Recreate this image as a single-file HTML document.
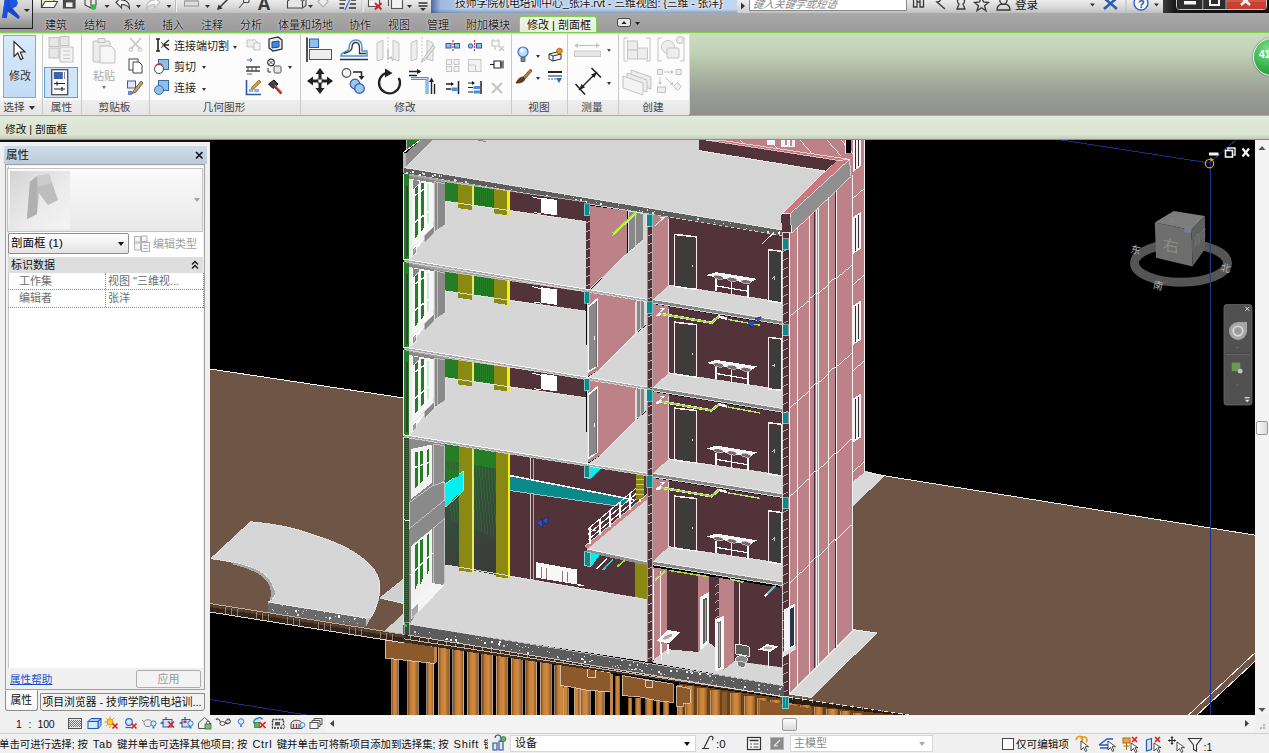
<!DOCTYPE html>
<html lang="zh-CN"><head><meta charset="utf-8"><title>Revit</title>
<style>
html,body{margin:0;padding:0;}
body{width:1269px;height:753px;overflow:hidden;position:relative;background:#f0f0f0;
 font-family:"Liberation Sans","Noto Sans CJK SC",sans-serif;font-size:11px;color:#1e1e1e;}
.abs{position:absolute;}
#view{position:absolute;left:210px;top:140px;width:1044.5px;height:575px;background:#000;overflow:hidden;}
#view svg{position:absolute;left:0;top:0;}

#qat{position:absolute;left:0;top:0;width:1269px;height:13px;background:linear-gradient(#ececec,#d6d6d6 60%,#bebebe);}
#tabs{position:absolute;left:0;top:13px;width:1269px;height:19px;background:linear-gradient(#a9a9a9,#9b9b9b);}
#tabs span{position:absolute;top:2.5px;height:18px;line-height:18px;font-size:11px;color:#222;white-space:nowrap;text-shadow:0 0 2px #e8e8e8,0 0 1px #e8e8e8;}
#acttab{position:absolute;left:518.5px;top:15.5px;width:78.5px;height:17.5px;background:linear-gradient(#f3f8ee,#e2ecd8);border:1.5px solid #7fd14b;border-bottom:none;border-radius:3px 3px 0 0;box-sizing:border-box;}
#appbtn{position:absolute;left:0;top:0;width:33px;height:29px;background:linear-gradient(#dcdcdc,#c4c4c4 45%,#8c8c8c);border-right:1.5px solid #222;border-bottom:1.5px solid #222;box-sizing:border-box;}
#title{position:absolute;left:431px;top:0;width:306px;height:13px;background:linear-gradient(rgba(0,0,0,0) 70%,rgba(40,60,90,0.35) 100%),linear-gradient(90deg,#4a6a9c 0,#9db9df 3%,#b3cbea 12%,#c3d6ef 100%);overflow:hidden;}
#title span{position:absolute;left:24px;top:-5px;font-size:10.95px;line-height:16px;color:#111;white-space:nowrap;text-shadow:0 0 3px #fff,0 0 2px #fff;letter-spacing:-0.15px;}
#search{position:absolute;left:749px;top:-3px;width:158px;height:14px;background:#fff;border:1px solid #8a8a8a;box-sizing:border-box;overflow:hidden;}
#search span{position:absolute;left:3px;top:-1px;font-size:10.5px;line-height:14px;font-style:italic;color:#8a8a8a;white-space:nowrap;transform:skewX(-12deg);}
#winbtn{position:absolute;left:1163px;top:0;width:106px;height:12.5px;background:linear-gradient(90deg,#3c3c3c,#161616 12%,#101010);}
#ribbon{position:absolute;left:0;top:32px;width:1269px;height:84px;background:linear-gradient(#cbdcc0 0%,#c1d1b6 24%,#aab5a2 50%,#999d95 75%,#8f908d 100%);border-top:1.5px solid #7fd14b;border-bottom:1.5px solid #7fd14b;box-sizing:border-box;}
#rpan{position:absolute;left:0;top:33.5px;width:689px;height:81px;background:#fcfcfc;}
#rlab{position:absolute;left:0;top:99.5px;width:689px;height:15px;background:linear-gradient(#efefef,#e4e4e4);}
.plab{position:absolute;top:100px;height:15px;line-height:15px;font-size:10.7px;color:#444;text-align:center;white-space:nowrap;}
.psep{position:absolute;top:34px;width:1px;height:80px;background:#c9c9c9;}
.rtxt{position:absolute;font-size:11px;line-height:13px;color:#1e1e1e;white-space:nowrap;}
.dd{position:absolute;width:0;height:0;border-left:2.5px solid transparent;border-right:2.5px solid transparent;border-top:3px solid #333;}
#opts{position:absolute;left:0;top:116px;width:1269px;height:23px;background:linear-gradient(#e1e9d9,#dbe4d2 80%,#c4ccbc);border-bottom:1px solid #8a8f86;box-sizing:content-box;}
#opts span{position:absolute;left:5px;top:5.5px;font-size:10.7px;line-height:14px;color:#111;}
#gap{position:absolute;left:0;top:139.5px;width:210px;height:2.2px;background:#141414;z-index:3;}
#props{position:absolute;left:0;top:140px;width:210px;height:575px;background:#f0f0f0;}
#ptitle{position:absolute;left:3.5px;top:5.5px;width:203.5px;height:18.5px;background:linear-gradient(#cfdbe8,#bccadb);}
#ptitle span{position:absolute;left:2.5px;top:2px;font-size:11.5px;line-height:15px;color:#111;}
#pbody{position:absolute;left:5px;top:24px;width:200px;height:526px;background:#f0f0f0;border:1px solid #a0a0a0;box-sizing:border-box;}
#pwhite{position:absolute;left:7.5px;top:26px;width:195.5px;height:502px;background:#fff;border-left:1px solid #c8c8c8;box-sizing:border-box;}
#ptype{position:absolute;left:7px;top:28px;width:196px;height:64px;background:linear-gradient(#fafafa,#e9e9e9);border:1px solid #c4c4c4;box-sizing:border-box;}
#pthumb{position:absolute;left:10px;top:31px;width:60px;height:58px;background:linear-gradient(135deg,#d4d4d4,#ececec 60%,#f4f4f4);}
#psel{position:absolute;left:8px;top:93px;width:121px;height:21px;background:linear-gradient(#ffffff,#e3e3e3);border:1px solid #8e8e8e;border-radius:2px;box-sizing:border-box;}
#psel span{position:absolute;left:2px;top:2px;font-size:11.5px;line-height:15px;color:#000;}
#pedit{position:absolute;left:153px;top:97px;font-size:11px;line-height:14px;color:#a0a0a0;}
#pgrp{position:absolute;left:8px;top:117px;width:195px;height:16px;background:#dedede;}
#pgrp span{position:absolute;left:3px;top:1px;font-size:11px;line-height:14px;color:#111;}
.prow{position:absolute;left:8px;width:195px;height:17px;border-bottom:1px dotted #8a8a8a;box-sizing:border-box;}
.prow b{position:absolute;left:0;top:0;width:97px;height:16px;border-right:1px dotted #8a8a8a;font-weight:normal;font-size:11px;line-height:16px;color:#6c6c6c;text-indent:11px;}
.prow i{position:absolute;left:100px;top:0;font-style:normal;font-size:11px;line-height:16px;color:#6c6c6c;white-space:nowrap;}
#phelp{position:absolute;left:10px;top:532px;font-size:10.6px;line-height:14px;color:#1a4fd0;text-decoration:underline;}
#papply{position:absolute;left:136px;top:530px;width:65px;height:18px;border:1px solid #adadad;border-radius:2px;background:#f3f3f3;box-sizing:border-box;text-align:center;font-size:11px;line-height:16px;color:#9a9a9a;}
.ptab{position:absolute;top:552.5px;height:18.5px;border-radius:0 0 3px 3px;box-sizing:border-box;border:1px solid #8c8c8c;font-size:10.8px;line-height:16.5px;color:#111;white-space:nowrap;text-align:center;background:#f2f2f2;}
#vcb{position:absolute;left:0;top:715px;width:1269px;height:18px;background:#f0f0f0;}
#vcb .sc{position:absolute;left:22px;top:2px;font-size:10.5px;line-height:14px;color:#111;letter-spacing:0.4px;white-space:pre;}
#hscroll{position:absolute;left:326px;top:715.5px;width:928.5px;height:16px;background:#f3f3f3;border-top:1px solid #fafafa;}
#vscroll{position:absolute;left:1254.5px;top:140px;width:14.5px;height:575px;background:#f3f3f3;}
.thumb{position:absolute;background:linear-gradient(90deg,#fdfdfd,#d8d8d8);border:1px solid #9a9a9a;border-radius:2px;box-sizing:border-box;}
#status{position:absolute;left:0;top:733px;width:1269px;height:20px;background:#f0f0f0;border-top:1px solid #d0d0d0;box-sizing:border-box;}
#status .msg{position:absolute;left:-1px;top:3px;width:489px;overflow:hidden;white-space:nowrap;font-size:10.4px;line-height:15px;color:#111;}
#status .msg u{text-decoration:none;letter-spacing:0.7px;margin:0 1.5px 0 2px;font-size:11px;}
.combo{position:absolute;top:735px;height:17px;background:#fff;border:1px solid #d6d6d6;box-sizing:border-box;font-size:11px;line-height:15px;white-space:nowrap;}

</style></head><body>
<div id="qat"></div>
<div id="title"><span>技师学院机电培训中心_张洋.rvt - 三维视图: {三维 - 张洋}</span></div>
<div class="abs" style="left:738px;top:0;width:11px;height:13px;background:linear-gradient(#efefef,#cfcfcf)"></div>
<svg class="abs" style="left:740px;top:2px" width="6" height="8" viewBox="0 0 6 8"><path d="M1,0.5 L5,4 L1,7.5z" fill="#333"/></svg>
<div id="search"><span>键入关键字或短语</span></div>
<svg class="abs" style="left:0px;top:0px" width="432" height="13" viewBox="0 0 432 13"><g fill="none" stroke="#444" stroke-width="1.1"><path d="M41.5,7.5 V-3 H46 L48,-1 H54 V2" fill="#f4ecd0"/><path d="M41.5,7.5 L45,1.5 H57.5 L54,7.5z" fill="#fdfdfd"/><rect x="63.5" y="-6" width="11.5" height="14" fill="#4c4c4c"/><rect x="66" y="2.500" width="6.500" height="4.500" fill="#f0f0f0" stroke="none"/><rect x="66" y="-6" width="6.500" height="5" fill="#e0e0e0" stroke="none"/><path d="M85,-3 L85,5 L91,8 L96,5 L96,-3" fill="#e8e8e8"/><path d="M91,0 V8" /><path d="M116,2.500 L121.5,-3 V0 C126.5,0 129.5,2.500 129.5,8.500 C127.5,5 125.5,4.500 121.5,4.500 V8z" fill="#f2f2f2" stroke="#3c3c3c"/><path d="M160,2.500 L154.500,-3 V0 C149.500,0 146.500,2.500 146.500,8.500 C148.500,5 150.500,4.500 154.500,4.500 V8z" fill="#f6f6f6" stroke="#bdbdbd"/><rect x="186" y="-4" width="11" height="5" stroke="#a8a8a8" fill="#eee"/><rect x="184.500" y="1" width="14" height="5" stroke="#9a9a9a" fill="#ddd"/><path d="M219.5,7.5 L230.5,-3.5" stroke="#333" stroke-width="1.400"/><path d="M217,10 l1.500,-5.500 l4,4z M233,-6 l-1.500,5.500 l-4,-4z" fill="#333" stroke="none"/><path d="M239,8 L244.500,1.500" stroke="#555"/><rect x="243.500" y="-4" width="5.500" height="6.500" rx="1" fill="#f0f0f0" stroke="#444"/><path d="M287.500,1 L295,-4 L302.500,1 V8 H287.500z" fill="#e6e6e6" stroke="#444"/><path d="M295,-4 L299,-6 L306,-1 L302.500,1 M302.500,8 L306,5.500 V-1" stroke="#555" fill="#d4d4d4"/><path d="M323,-4 L328,1.500 L323,7 L318,1.500z" stroke="#ababab" fill="#ececec"/><path d="M339.500,0 H346 M351,0 H356 M339.500,4 H345 M350,4 H356 M339.500,8 H344 M349,8 H356" stroke="#333" stroke-width="1.400"/><path d="M345,10 L351.500,-4" stroke="#3a78d8" stroke-width="1.300"/><rect x="368.500" y="-3" width="11" height="9.500" fill="#f2f2f2" stroke="#555"/><path d="M368.500,-0.500 h11" stroke="#555"/><rect x="391.500" y="-1" width="11" height="9.500" fill="#f2f2f2" stroke="#555"/><path d="M388.500,6 V-4 H399" stroke="#555"/></g><circle cx="93.500" cy="7" r="2.800" fill="#2fbf3a"/><path d="M375,3 l6.500,6.500 m0,-6.500 l-6.500,6.500" stroke="#e02020" stroke-width="2" fill="none"/><text x="257.500" y="10" font-family="Liberation Sans,sans-serif" font-weight="bold" font-size="18" fill="#3a3a3a">A</text><path d="M418.500,3 h9 M418.500,6 h9" stroke="#333" stroke-width="1.400"/><path d="M420,8 h6 l-3,3z" fill="#333"/><path d="M104.5,5 h5 l-2.500,3z" fill="#333"/><path d="M136,5 h5 l-2.500,3z" fill="#333"/><path d="M166.5,5 h5 l-2.500,3z" fill="#333"/><path d="M205,5 h5 l-2.500,3z" fill="#333"/><path d="M308,5 h5 l-2.500,3z" fill="#333"/><path d="M407,5 h5 l-2.500,3z" fill="#333"/><path d="M175.500,0 V12" stroke="#bbb"/><path d="M176.500,0 V12" stroke="#f4f4f4"/><path d="M362,0 V12" stroke="#bbb"/><path d="M363,0 V12" stroke="#f4f4f4"/></svg>
<svg class="abs" style="left:900px;top:0px" width="265" height="13" viewBox="900 0 265 13"><g fill="none" stroke="#3a3a3a" stroke-width="1.3"><path d="M913.5,-2 v9 h3.5 v-9 M920,-2 v9 h3.5 v-9 M917,2 h3" /><path d="M933,-3 a4,4 0 1 1 4,5 l8,7" /><path d="M957,9 l2,-5 a3.5,3.5 0 1 1 4,0 l2,5z" /><path d="M981.5,-3 l2,5 5,0.5 -4,3.2 1.5,5 -4.5,-3 -4.5,3 1.5,-5 -4,-3.2 5,-0.5z" /><path d="M1003.5,-4 a3.6,4.2 0 1 1 -0.1,0 M997,10 c0,-5 3,-6 6.5,-6 s6.500,1 6.500,6z" /></g><text x="1015" y="8.5" font-family="Liberation Sans,Noto Sans CJK SC,sans-serif" font-size="11.5" fill="#111">登录</text><path d="M1090,3.5 h5 l-2.500,3z M1154,3.5 h5 l-2.500,3z" fill="#333"/><path d="M1104,-2 L1117,9 M1117,-2 L1104,9" stroke="#2a5db0" stroke-width="2.6" fill="none"/><circle cx="1141" cy="3" r="7" fill="#f4f8ff" stroke="#3a62b4" stroke-width="1.4"/><text x="1138" y="7.5" font-family="Liberation Sans,sans-serif" font-weight="bold" font-size="11" fill="#2a52a4">?</text><path d="M1126,0 V12" stroke="#bbb"/></svg>
<div id="winbtn"></div>
<svg class="abs" style="left:1163px;top:0px" width="106" height="13" viewBox="1163 0 106 13"><rect x="1176.500" y="-4" width="90" height="13.500" rx="3" fill="none" stroke="#c8c8c8" stroke-width="1"/><rect x="1177.500" y="-4" width="25" height="13" fill="#2c2c2c"/><rect x="1203.500" y="-4" width="22" height="13" fill="#2c2c2c"/><rect x="1226.500" y="-4" width="39.500" height="13" rx="2" fill="#c8402e"/><rect x="1226.500" y="-4" width="39.500" height="6" fill="#d86a58" opacity="0.6"/><path d="M1202.800,-2 V9.500 M1226,-2 V9.500" stroke="#bbb" stroke-width="1"/><rect x="1184" y="1" width="12" height="3.500" fill="#f4f4f4"/><path d="M1210,-3 h9 v8 h-9z" fill="none" stroke="#f4f4f4" stroke-width="2"/><path d="M1241,-3 l9,8 M1250,-3 l-9,8" stroke="#f4f4f4" stroke-width="2.600"/></svg>
<div id="tabs">
<span style="left:45px">建筑</span>
<span style="left:84px">结构</span>
<span style="left:123px">系统</span>
<span style="left:162px">插入</span>
<span style="left:201px">注释</span>
<span style="left:240px">分析</span>
<span style="left:278px">体量和场地</span>
<span style="left:349px">协作</span>
<span style="left:388px">视图</span>
<span style="left:427px">管理</span>
<span style="left:466px">附加模块</span>
</div>
<div id="acttab"></div>
<div class="abs" style="left:527px;top:15.500px;font-size:11px;line-height:18px;color:#111;white-space:nowrap">修改 | 剖面框</div>
<svg class="abs" style="left:617px;top:17px" width="26" height="12" viewBox="0 0 26 12"><rect x="0.500" y="1.500" width="13" height="8" rx="2" fill="#e8e8e8" stroke="#444"/><path d="M4.500,7 h5 l-2.500,-3z" fill="#222"/><path d="M18,5 h5 l-2.500,3z" fill="#222"/></svg>
<div id="appbtn"></div>
<svg class="abs" style="left:0px;top:0px" width="32" height="28" viewBox="0 0 32 28"><path d="M4.800,-1 L16.300,-1 L17.700,2.900 L16.300,6.200 L12.500,8.300 L19.900,16.700 L18.400,19.100 L8.300,12 L7.700,12 L6.700,18.200 L2.200,17.700z" fill="#1747cc"/><path d="M9,-1 L16.300,-1 L17.700,2.900 L16.300,6.200 L12.500,8.300 L9.500,7z" fill="#1f56de"/><path d="M4.800,-1 L8,-1 L5.500,17.900 L2.200,17.700z" fill="#1a50e0"/><path d="M23.900,9.100 h6 l-3,2.800z" fill="#2a2a2a"/></svg>
<div id="ribbon"></div><div id="rpan"></div><div id="rlab"></div>
<div class="psep" style="left:41.5px"></div>
<div class="psep" style="left:81px"></div>
<div class="psep" style="left:148.5px"></div>
<div class="psep" style="left:299.5px"></div>
<div class="psep" style="left:510.5px"></div>
<div class="psep" style="left:567px"></div>
<div class="psep" style="left:617.5px"></div>
<div class="abs" style="left:688.500px;top:34px;width:1.500px;height:80px;background:#d8e4cf"></div>
<div class="plab" style="left:1px;width:26px">选择</div>
<div class="plab" style="left:42px;width:39px">属性</div>
<div class="plab" style="left:81px;width:67px">剪贴板</div>
<div class="plab" style="left:149px;width:150px">几何图形</div>
<div class="plab" style="left:300px;width:210px">修改</div>
<div class="plab" style="left:511px;width:56px">视图</div>
<div class="plab" style="left:567px;width:50px">测量</div>
<div class="plab" style="left:618px;width:70px">创建</div>
<div class="dd" style="left:29px;top:105.5px;border-left-width:3.5px;border-right-width:3.5px;border-top-width:4px"></div>
<div class="abs" style="left:2.500px;top:34.500px;width:33px;height:63px;background:linear-gradient(#d9eaf9,#c2dcf5);border:1px solid #74aee2;box-sizing:border-box"></div>
<svg class="abs" style="left:12px;top:40px" width="16" height="22" viewBox="0 0 16 22"><path d="M2,1.500 L2,16.500 L5.800,13 L8.600,19.500 L11,18.500 L8.200,12 L13,12z" fill="#fff" stroke="#222" stroke-width="1.100"/></svg>
<div class="rtxt" style="left:9px;top:70px;color:#333">修改</div>
<svg class="abs" style="left:47px;top:36px" width="29" height="28" viewBox="0 0 29 28"><g fill="#e6e6e6" stroke="#c2c2c2" stroke-width="1"><rect x="2" y="1.500" width="10" height="9"/><rect x="13" y="0.500" width="9" height="9"/><rect x="2" y="12" width="10" height="10"/><rect x="13" y="11" width="13" height="15" fill="#f2f2f2"/></g><path d="M16,15 h7 M16,19 h7 M16,22.500 h7" stroke="#c8c8c8"/></svg>
<div class="abs" style="left:44px;top:67px;width:34px;height:31px;background:#cfe6fa;border:1px solid #5ba0e0;box-sizing:border-box"></div>
<svg class="abs" style="left:51px;top:69px" width="18" height="27" viewBox="0 0 18 27"><rect x="0.700" y="0.700" width="16" height="25" fill="#fbfbfb" stroke="#444" stroke-width="1.200"/><rect x="2.800" y="3" width="9" height="7" fill="#3c64a8"/><path d="M13.500,3 V10" stroke="#888"/><path d="M3,14.500 h11 M3,20 h11" stroke="#222" stroke-width="1.200"/><path d="M6,12.500 v4 M11,18 v4" stroke="#222" stroke-width="1.200"/></svg>
<svg class="abs" style="left:91px;top:37px" width="27" height="28" viewBox="0 0 27 28"><g fill="#ececec" stroke="#c0c0c0"><rect x="2" y="4" width="17" height="21" rx="1"/><rect x="7" y="1.500" width="7" height="4"/><path d="M9,9 h11 l4,4 v13 h-15z" fill="#f6f6f6"/></g></svg>
<div class="rtxt" style="left:93px;top:70px;color:#ababab">粘贴</div>
<div class="dd" style="left:101.5px;top:86px;border-top-color:#777"></div>
<svg class="abs" style="left:127px;top:37px" width="18" height="15" viewBox="0 0 18 15"><path d="M3,1 L13,12 M14,1 L4,12" stroke="#c2c2c2" stroke-width="1.400"/><circle cx="4" cy="12.500" r="1.800" fill="none" stroke="#c2c2c2"/><circle cx="13" cy="12.500" r="1.800" fill="none" stroke="#c2c2c2"/></svg>
<svg class="abs" style="left:127px;top:58px" width="18" height="16" viewBox="0 0 18 16"><rect x="2" y="1" width="9" height="11" fill="#fff" stroke="#444"/><path d="M6,4 h6 l3,3 v8 h-9z" fill="#fff" stroke="#444"/></svg>
<svg class="abs" style="left:126px;top:80px" width="19" height="16" viewBox="0 0 19 16"><rect x="1.500" y="1" width="8" height="7" fill="#dfe8f4" stroke="#3a5a98"/><path d="M15,1 L8,10 L5,14 L10,12 L17,3z" fill="#caa56a" stroke="#444" stroke-width="0.800"/><path d="M2,11 h4 v4 h-4z" fill="#6a8ad0"/></svg>
<svg class="abs" style="left:154px;top:37px" width="17" height="16" viewBox="0 0 17 16"><path d="M2,2 h4 M2,14 h4 M4,2 V14" stroke="#222" stroke-width="1.600"/><path d="M15,3 L9,8 L15,13 M9,8 h6" stroke="#222" stroke-width="1.300" fill="none"/><path d="M7,5 l3,3 l-3,3" fill="none" stroke="#555"/></svg>
<div class="rtxt" style="left:174px;top:40px">连接端切割</div>
<div class="dd" style="left:233px;top:45.5px;border-top-color:#333"></div>
<svg class="abs" style="left:153px;top:58px" width="17" height="17" viewBox="0 0 17 17"><rect x="5.500" y="1.500" width="10" height="10" fill="#8fc0ea" stroke="#3a6aa8"/><circle cx="6" cy="11" r="4.500" fill="#fff" stroke="#444"/><path d="M2.500,8 a4.500,4.500 0 0 1 7,-1" fill="none" stroke="#d03030" stroke-width="1.200"/></svg>
<div class="rtxt" style="left:174px;top:60.500px">剪切</div>
<div class="dd" style="left:201.5px;top:66px;border-top-color:#333"></div>
<svg class="abs" style="left:153px;top:79px" width="17" height="17" viewBox="0 0 17 17"><rect x="5.500" y="1.500" width="10" height="10" fill="#8fc0ea" stroke="#3a6aa8"/><circle cx="6" cy="11" r="4.500" fill="#8fc0ea" stroke="#3a6aa8"/></svg>
<div class="rtxt" style="left:174px;top:81.500px">连接</div>
<div class="dd" style="left:201.5px;top:87.5px;border-top-color:#333"></div>
<svg class="abs" style="left:245px;top:37px" width="17" height="16" viewBox="0 0 17 16"><path d="M2,3 h7 l0,-1 l5,5 l-5,5 v-2 h-7z" fill="#eee" stroke="#c4c4c4"/><rect x="9" y="6" width="6" height="7" fill="#f4f4f4" stroke="#c4c4c4"/></svg>
<svg class="abs" style="left:267px;top:36px" width="17" height="17" viewBox="0 0 17 17"><path d="M2,3 L11,1 L15,4 L15,13 L6,15 L2,12z" fill="#e8eef8" stroke="#222" stroke-width="1.200"/><path d="M5,6 L12,5 V11 L5,12z" fill="#4a86d8" stroke="#1c4a98"/></svg>
<svg class="abs" style="left:245px;top:58px" width="17" height="17" viewBox="0 0 17 17"><path d="M1,9 h14 M1,13 h14" stroke="#444" stroke-width="1.300"/><path d="M3,9 v4 M7,9 v4 M11,9 v4" stroke="#444"/><path d="M2,2 h5 m-2,-2 l2,2 l-2,2 M2,16 h5" stroke="#2a6ad0" fill="none"/></svg>
<svg class="abs" style="left:266px;top:58px" width="20" height="17" viewBox="0 0 20 17"><circle cx="5" cy="4.500" r="3.300" fill="none" stroke="#333" stroke-width="1.200"/><path d="M3,2.500 l4,4 m0,-4 l-4,4" stroke="#333" stroke-width="0.800"/><rect x="8" y="8" width="7" height="7" rx="1.500" fill="#e4e4e4" stroke="#555"/><path d="M2,10 v4 h3" fill="none" stroke="#333"/></svg>
<div class="dd" style="left:288px;top:65.5px;border-top-color:#333"></div>
<svg class="abs" style="left:245px;top:79px" width="18" height="17" viewBox="0 0 18 17"><path d="M1.500,1 V15.500 H16" stroke="#2a5aa8" stroke-width="1.600" fill="none"/><path d="M4,13 h4 v-3 h-4z M9,13 h5 v-3 h-5z" fill="#8ab0e0"/><path d="M6,9 L14,1 L16,3 L8,10.500z" fill="#e0a030" stroke="#7a4a10" stroke-width="0.700"/></svg>
<svg class="abs" style="left:267px;top:79px" width="17" height="17" viewBox="0 0 17 17"><path d="M1.500,5 L7,1 L11,5 L6,9.500z" fill="#444" stroke="#111"/><path d="M7.500,7 L14.500,14.500" stroke="#b0302a" stroke-width="2.600"/><path d="M8,6 L15,13.500" stroke="#e88a70" stroke-width="0.800"/></svg>
<svg class="abs" style="left:305px;top:37px" width="29" height="27" viewBox="0 0 29 27"><path d="M2,0.500 V25" stroke="#222" stroke-width="1.600"/><rect x="4.500" y="2" width="9" height="8.500" fill="#8ec0ee" stroke="#2a5aa0"/><rect x="4.500" y="12.500" width="22" height="10" fill="#eeeeee" stroke="#555"/></svg>
<svg class="abs" style="left:339px;top:38px" width="30" height="24" viewBox="0 0 30 24"><path d="M2,18 C2,13 10,15 10,10 C10,4 14,2 17,2 C21,2 23,5 23,10 L23,13 H28 V18z" fill="none" stroke="#4a90d8" stroke-width="1.500"/><path d="M1,21.500 H29" stroke="#333" stroke-width="1.500"/><path d="M5,15.500 C8,14 13,14 13,9.500 C13,6 15,4.500 17,4.500 C19.500,4.500 20.500,6.500 20.500,10 V15.500 H27" fill="none" stroke="#333" stroke-width="1.300"/></svg>
<svg class="abs" style="left:375px;top:37px" width="27" height="27" viewBox="0 0 27 27"><path d="M2,6 L8,3 V22 L2,24z M24,6 L18,3 V22 L24,24z" fill="#ededed" stroke="#c4c4c4"/><path d="M13,0 V26" stroke="#c4c4c4" stroke-dasharray="2 1.500"/><path d="M13,12 v10 l3,-2 l2,4" fill="none" stroke="#bcbcbc" stroke-width="1.200"/></svg>
<svg class="abs" style="left:409px;top:37px" width="27" height="27" viewBox="0 0 27 27"><path d="M2,6 L8,3 V22 L2,24z M24,6 L18,3 V22 L24,24z" fill="#ededed" stroke="#c4c4c4"/><path d="M13,0 V26" stroke="#c4c4c4" stroke-dasharray="2 1.500"/><path d="M24,8 L14,22 L12,25 L16,23 L26,10z" fill="#e4e4e4" stroke="#bcbcbc"/></svg>
<svg class="abs" style="left:306px;top:67px" width="28" height="28" viewBox="0 0 28 28"><path d="M14,1 L9.500,7 H12.500 V12.500 H7 V9.500 L1,14 L7,18.500 V15.500 H12.500 V21 H9.500 L14,27 L18.500,21 H15.500 V15.500 H21 V18.500 L27,14 L21,9.500 V12.500 H15.500 V7 H18.500z" fill="#222"/><rect x="12" y="12" width="4" height="4" fill="#fff" stroke="#222" stroke-width="0.800"/></svg>
<svg class="abs" style="left:340px;top:67px" width="29" height="28" viewBox="0 0 29 28"><circle cx="6.500" cy="6" r="4.300" fill="#f4f4f4" stroke="#555" stroke-width="1.200"/><path d="M13,5 H21.500 V10" fill="none" stroke="#222" stroke-width="1.500"/><path d="M18.500,9 h6 l-3,4z" fill="#222"/><circle cx="15" cy="17" r="4.800" fill="#9cc8f0" stroke="#2a5aa0" stroke-width="1.200"/><circle cx="19.500" cy="21.500" r="4.800" fill="#9cc8f0" stroke="#2a5aa0" stroke-width="1.200"/></svg>
<svg class="abs" style="left:375px;top:67px" width="28" height="29" viewBox="0 0 28 29"><path d="M11.500,5.800 A10.500,10.500 0 1 0 23.800,11" fill="none" stroke="#222" stroke-width="2.300"/><path d="M10,1.500 L17.500,6 L10,10.500z" fill="#222"/></svg>
<svg class="abs" style="left:408px;top:67px" width="30" height="28" viewBox="0 0 30 28"><path d="M1,4.500 H12 M1,8.500 H9" stroke="#222" stroke-width="1.400"/><path d="M9,2 l4.500,2.500 l-4.500,2.500z" fill="#222"/><path d="M3,11.500 H19 V27" fill="none" stroke="#4a90d8" stroke-width="3"/><path d="M3,11.500 H19 V27" fill="none" stroke="#cfe4f8" stroke-width="1"/><path d="M23.500,27 V14 M26.500,27 V17" stroke="#222" stroke-width="1.400"/><path d="M21,15 l2.500,-4.500 l2.500,4.500z" fill="#222"/></svg>
<svg class="abs" style="left:445px;top:40px" width="16" height="12" viewBox="0 0 16 12"><rect x="1" y="3.500" width="5" height="4.500" fill="#8ec0ee" stroke="#2a5aa0"/><rect x="9.500" y="3.500" width="5" height="4.500" fill="#8ec0ee" stroke="#2a5aa0"/><path d="M8,0 V11.500" stroke="#d03030" stroke-width="1.200" stroke-dasharray="2 1"/></svg>
<svg class="abs" style="left:467px;top:40px" width="16" height="12" viewBox="0 0 16 12"><circle cx="3.500" cy="6" r="2.200" fill="#8ec0ee" stroke="#2a5aa0"/><rect x="9.500" y="3.500" width="5" height="4.500" fill="#8ec0ee" stroke="#2a5aa0"/><path d="M7.500,0 V11.500" stroke="#d03030" stroke-width="1.200" stroke-dasharray="2 1"/></svg>
<svg class="abs" style="left:490px;top:38px" width="15" height="14" viewBox="0 0 15 14"><path d="M2,3 h7 v5 h-7z M5,8 v4 M3,1 v2 M8,1 v2" fill="none" stroke="#c4c4c4" stroke-width="1.200"/><path d="M9,8 l5,5 m0,-5 l-5,5" stroke="#c8c8c8" stroke-width="1.200"/></svg>
<svg class="abs" style="left:445px;top:58px" width="16" height="15" viewBox="0 0 16 15"><g fill="#f2f2f2" stroke="#c6c6c6"><rect x="1.500" y="1.500" width="5" height="5"/><rect x="9" y="1.500" width="5" height="5"/><rect x="1.500" y="8.500" width="5" height="5"/><rect x="9" y="8.500" width="5" height="5"/></g></svg>
<svg class="abs" style="left:467px;top:58px" width="16" height="15" viewBox="0 0 16 15"><g fill="#f2f2f2" stroke="#c6c6c6"><rect x="1.500" y="1.500" width="12.500" height="12"/><rect x="1.500" y="7" width="7" height="6.500"/></g></svg>
<svg class="abs" style="left:489px;top:59px" width="16" height="13" viewBox="0 0 16 13"><path d="M5,2 h7 v7 h-7z" fill="#fff" stroke="#222" stroke-width="1.100"/><path d="M1,5.500 h4 M12,3 v5 M14,1.500 v8" stroke="#222" stroke-width="1.100"/></svg>
<svg class="abs" style="left:445px;top:80px" width="16" height="15" viewBox="0 0 16 15"><path d="M1,4 h7 M1,9 h5" stroke="#222" stroke-width="1.300"/><path d="M6,2 l3,2 l-3,2z" fill="#222"/><path d="M13.500,1 V14" stroke="#222" stroke-width="1.500"/><rect x="6.500" y="7.500" width="6" height="3.500" fill="#4a90d8"/></svg>
<svg class="abs" style="left:467px;top:80px" width="16" height="15" viewBox="0 0 16 15"><path d="M1,3 h6 M1,7.500 h5 M1,12 h5" stroke="#222" stroke-width="1.200"/><path d="M5,1 l3,2 l-3,2z" fill="#222"/><path d="M14,1 V14" stroke="#222" stroke-width="1.500"/><rect x="6.500" y="6" width="6.500" height="3" fill="#4a90d8"/><rect x="6.500" y="10.500" width="6.500" height="3" fill="#4a90d8"/></svg>
<svg class="abs" style="left:490px;top:81px" width="15" height="14" viewBox="0 0 15 14"><path d="M2,2 L12,12 M12,2 L2,12" stroke="#c8c8c8" stroke-width="2.400"/></svg>
<svg class="abs" style="left:516px;top:45px" width="15" height="20" viewBox="0 0 15 20"><circle cx="7" cy="7" r="5" fill="#bcdcf8" stroke="#3a72c0" stroke-width="1.200"/><circle cx="6" cy="5.500" r="2" fill="#f4faff"/><path d="M5,12.500 h4 v4 h-4z" fill="#888" stroke="#444" stroke-width="0.700"/></svg>
<div class="dd" style="left:535.5px;top:54.5px;border-top-color:#333"></div>
<svg class="abs" style="left:547px;top:47px" width="17" height="16" viewBox="0 0 17 16"><path d="M2,7 L10,5 L14,7 V12 L6,14 L2,12z" fill="#f4f4f4" stroke="#333"/><path d="M2,7 L6,9 L14,7 M6,9 V14" fill="none" stroke="#333"/><circle cx="12.500" cy="4" r="2.800" fill="#f0901c" stroke="#a85a08" stroke-width="0.800"/></svg>
<svg class="abs" style="left:515px;top:68px" width="18" height="17" viewBox="0 0 18 17"><path d="M15.500,1 L8,9 L10,11 L17,3z" fill="#b87838" stroke="#5a3a10" stroke-width="0.700"/><path d="M8,9 C5,9 3,11 1,15 C5,15.500 9,14 10,11z" fill="#6a3a14" stroke="#3a1a08" stroke-width="0.700"/></svg>
<div class="dd" style="left:535.5px;top:76.5px;border-top-color:#333"></div>
<svg class="abs" style="left:547px;top:69px" width="17" height="16" viewBox="0 0 17 16"><path d="M1,3 H15" stroke="#222" stroke-width="2"/><path d="M1,7 H15" stroke="#222" stroke-width="1"/><path d="M1,10 H9" stroke="#2a6ad0" stroke-width="1" stroke-dasharray="2 1"/><path d="M9,9 h6 l-3,5z" fill="#2a6ad0"/></svg>
<svg class="abs" style="left:573px;top:41px" width="29" height="18" viewBox="0 0 29 18"><path d="M3,4.500 H25" stroke="#c4c4c4" stroke-width="1.200"/><path d="M1,4.500 l4,-2.500 v5z M27,4.500 l-4,-2.500 v5z" fill="#c4c4c4"/><rect x="1.500" y="10" width="26" height="5.500" fill="#e6e6e6" stroke="#cacaca"/></svg>
<div class="dd" style="left:606.5px;top:48.5px;border-top-color:#555"></div>
<svg class="abs" style="left:574px;top:67px" width="29" height="29" viewBox="0 0 29 29"><path d="M5,23 L23,5" stroke="#222" stroke-width="1.400"/><path d="M1.500,17 L11,27.500 M17.500,1 L27,10.500" stroke="#222" stroke-width="1.600"/><path d="M5,23 l2.500,-6 l3.500,3.500z M23,5 l-2.500,6 l-3.500,-3.500z" fill="#222"/></svg>
<div class="dd" style="left:606.5px;top:81.5px;border-top-color:#333"></div>
<svg class="abs" style="left:622px;top:36px" width="30" height="28" viewBox="0 0 30 28"><g fill="#ededed" stroke="#c4c4c4"><path d="M6,2 h-4 v23 h4 M24,2 h4 v23 h-4" fill="none"/><rect x="5.500" y="5" width="10" height="9"/><rect x="5.500" y="14" width="10" height="9"/><rect x="15.500" y="12" width="10" height="11"/></g></svg>
<svg class="abs" style="left:656px;top:35px" width="30" height="29" viewBox="0 0 30 29"><g fill="#ededed" stroke="#c4c4c4"><path d="M6,3 h-4 v23 h4 M24,3 h4 v23 h-4" fill="none"/><circle cx="12" cy="12" r="6.500"/><rect x="11" y="13" width="12" height="10" rx="1"/><circle cx="24" cy="5" r="3.500"/></g></svg>
<svg class="abs" style="left:622px;top:68px" width="31" height="28" viewBox="0 0 31 28"><g fill="#ececec" stroke="#c2c2c2"><path d="M9,2 L29,9 V21 L9,14z"/><path d="M5,5 L25,12 V24 L5,17z"/><path d="M1,8 L21,15 V27 L1,20z" fill="#f4f4f4"/></g></svg>
<svg class="abs" style="left:656px;top:68px" width="28" height="27" viewBox="0 0 28 27"><g fill="#efefef" stroke="#c2c2c2"><rect x="1.500" y="1.500" width="5" height="5"/><rect x="20" y="1.500" width="5" height="5"/><rect x="1.500" y="19" width="8" height="5.500"/><path d="M21.500,14.500 l4,4 l-4,4 l-4,-4z"/></g><path d="M8,4 h9 M4,9 v7 M9,9 l8,8" stroke="#c2c2c2" fill="none"/><path d="M15,2 l3,2 l-3,2z M2,14 l2,3 l2,-3z M14,16.500 l3.500,1 l-1,-3.500z" fill="#c2c2c2"/></svg>
<div class="abs" style="left:1253px;top:37.500px;width:38px;height:38px;border-radius:19px;background:radial-gradient(circle at 40% 30%,#7be08a,#35b04a 55%,#1f8a34);border:1.500px solid #e8f4e4;box-sizing:border-box;box-shadow:0 0 2px #555"></div>
<div class="abs" style="left:1259px;top:49px;font-size:10px;font-weight:bold;color:#fff;line-height:12px">41</div>
<div id="opts"><span>修改 | 剖面框</span></div>
<div id="gap"></div><div id="props"><div id="ptitle"><span>属性</span></div>
<svg class="abs" style="left:195px;top:11px" width="9" height="9" viewBox="0 0 9 9"><path d="M1,1 L7.500,7.500 M7.500,1 L1,7.500" stroke="#111" stroke-width="1.600"/></svg>
<div id="pbody"></div><div id="pwhite"></div><div id="ptype"></div><div id="pthumb"></div>
<svg class="abs" style="left:16px;top:34px" width="48" height="52" viewBox="0 0 48 52"><path d="M21,2 L33,0 L42,26 L32,31 L23,19 L21,40 L11,45 L14,8z" fill="#bdbdbd"/><path d="M21,2 L33,0 L36,9 L22,13z" fill="#cccccc"/><path d="M14,8 L21,2 L21,40 L11,45z" fill="#b0b0b0"/></svg>
<div class="dd" style="left:194px;top:58px;border-left-width:3.5px;border-right-width:3.5px;border-top-width:4px;border-top-color:#a0a0a0"></div>
<div id="psel"><span>剖面框 (1)</span></div>
<div class="dd" style="left:118px;top:102px;border-left-width:3.5px;border-right-width:3.5px;border-top-width:4px;border-top-color:#111"></div>
<svg class="abs" style="left:133px;top:95px" width="18" height="18" viewBox="0 0 18 18"><g fill="#f4f4f4" stroke="#b4b4b4"><rect x="1.500" y="1.500" width="6" height="5.500"/><rect x="8.500" y="1" width="5.500" height="5.500"/><rect x="1.500" y="8" width="6" height="7"/><rect x="8.500" y="7.500" width="8" height="9"/></g><path d="M10.500,10.500 h4 M10.500,13.500 h4" stroke="#b4b4b4"/></svg>
<div id="pedit">编辑类型</div>
<div id="pgrp"><span>标识数据</span></div>
<svg class="abs" style="left:190px;top:120px" width="10" height="10" viewBox="0 0 10 10"><path d="M2,4.500 L5,1.500 L8,4.500 M2,8.500 L5,5.500 L8,8.500" fill="none" stroke="#111" stroke-width="1.300"/></svg>
<div class="prow" style="top:133px"><b>工作集</b><i>视图 "三维视...</i></div>
<div class="prow" style="top:150px;height:18px"><b style="height:17px;line-height:17px">编辑者</b><i>张洋</i></div>
<div class="abs" style="left:202.500px;top:133px;width:0;height:35px;border-left:1px dotted #8a8a8a"></div>
<div id="phelp">属性帮助</div><div id="papply">应用</div>
<div class="ptab" style="left:4.5px;width:33.5px;background:#fafafa;border-top-color:#fafafa;height:20.5px;top:550px;line-height:19px">属性</div>
<div class="ptab" style="left:39.5px;width:165px">项目浏览器 - 技师学院机电培训...</div>
</div>
<div id="vscroll"></div>
<div class="thumb" style="left:1255.5px;top:421px;width:12.500px;height:13.5px"></div>
<svg class="abs" style="left:1257px;top:144px" width="10" height="8" viewBox="0 0 10 8"><path d="M1.500,6 L5,2 L8.500,6z" fill="#555"/></svg>
<svg class="abs" style="left:1257px;top:706px" width="10" height="8" viewBox="0 0 10 8"><path d="M1.500,2 L5,6 L8.500,2z" fill="#555"/></svg>
<div id="vcb"><span class="sc" style="left:16px">1</span><span class="sc" style="left:28.5px">:</span><span class="sc" style="left:37.5px;letter-spacing:-0.2px">100</span></div>
<div id="hscroll"></div>
<div class="thumb" style="left:782px;top:717.500px;width:15px;height:13px;background:linear-gradient(#fdfdfd,#d8d8d8)"></div>
<svg class="abs" style="left:328px;top:719px" width="8" height="9" viewBox="0 0 8 9"><path d="M6,1 L2,4.500 L6,8z" fill="#444"/></svg>
<svg class="abs" style="left:1243px;top:719px" width="8" height="9" viewBox="0 0 8 9"><path d="M2,1 L6,4.500 L2,8z" fill="#444"/></svg>
<svg class="abs" style="left:1254.5px;top:716px" width="14.5" height="16" viewBox="0 0 14.5 16"><rect width="14.5" height="16" fill="#f0f0f0"/><g fill="#b8b8b8"><rect x="8" y="11" width="2" height="2"/><rect x="5" y="11" width="2" height="2"/><rect x="8" y="8" width="2" height="2"/></g></svg>
<svg class="abs" style="left:68px;top:716px" width="260" height="16" viewBox="68 0 260 16"><rect x="68.500" y="2.500" width="13" height="10" fill="#e8e8e8" stroke="#555"/><path d="M69,4.500 h12 M69,6.500 h12 M69,8.500 h12 M69,10.500 h12" stroke="#666" stroke-width="0.900" stroke-dasharray="1 1"/><path d="M69,5.500 h12 M69,7.500 h12 M69,9.500 h12" stroke="#666" stroke-width="0.900" stroke-dasharray="1 1" stroke-dashoffset="1"/><path d="M88,5.500 L91,2.500 H101 L98,5.500z M98,5.500 L101,2.500 V9.500 L98,12.500z" fill="#a8ccf4" stroke="#1c5ab8" stroke-width="1"/><rect x="88" y="5.500" width="10" height="7" fill="#d4e8fc" stroke="#1c5ab8" stroke-width="1"/><circle cx="110" cy="6" r="3.200" fill="#f8c830" stroke="#d08a10" stroke-width="0.800"/><path d="M110,0.500 v2 M110,10 v2 M104.500,6 h2 M106,2 l1.500,1.500 M114,2 l-1.500,1.500 M106,10 l1.500,-1.500" stroke="#e09a10"/><path d="M112.500,7.500 l5,5 m0,-5 l-5,5" stroke="#e02020" stroke-width="1.700"/><circle cx="129" cy="6" r="3.300" fill="#d8e8fc" stroke="#2a6ad0" stroke-width="1.200"/><path d="M125.500,11.500 h6" stroke="#2a6ad0" stroke-width="1.300"/><path d="M131.500,7.500 l5,5 m0,-5 l-5,5" stroke="#e02020" stroke-width="1.700"/><path d="M142,4 l2,2 c1,-3 7,-3 8,0 c0.500,3 -2,5 -5,4.500 c-2,0 -3,-2 -3,-4" fill="#ececec" stroke="#777" stroke-width="0.900"/><circle cx="153.500" cy="7.500" r="2.600" fill="#d8ecff" stroke="#2a7ad8" stroke-width="1"/><path d="M152.500,10.500 h2 v2 h-2z" fill="#2a7ad8"/><rect x="163" y="3.500" width="9" height="7.500" fill="#cfe0f8" stroke="#2a5ab0"/><path d="M160.500,7 h3 M166,1 v3" stroke="#2a5ab0" stroke-width="1.300"/><path d="M168,5.500 l6,6 m0,-6 l-6,6" stroke="#e02020" stroke-width="1.700"/><rect x="182" y="3.500" width="8" height="7.500" fill="#cfe0f8" stroke="#2a5ab0"/><path d="M179.500,7 h3 M185,1 v3" stroke="#2a5ab0" stroke-width="1.300"/><rect x="183.500" y="4.500" width="3" height="2.500" fill="#d03030"/><circle cx="190.500" cy="7.500" r="2.600" fill="#d8ecff" stroke="#2a7ad8" stroke-width="1"/><path d="M189.500,10.500 h2 v2 h-2z" fill="#2a7ad8"/><path d="M198.500,7 L204.500,1.500 L210.500,7 V12.500 H198.500z" fill="#f0f0f0" stroke="#555" stroke-width="1"/><rect x="205" y="8" width="6" height="5" fill="#7ab87a" stroke="#3a6a3a" stroke-width="0.800"/><path d="M206.500,8 v-1.500 a1.500,1.500 0 0 1 3,0 v1.500" fill="none" stroke="#555" stroke-width="0.900"/><path d="M216,4 c1,-2 3,-1 4,1 c0,3 4,4 5,1.500 c2,2 5,1 5,-1.500 c0,-2 -2,-2.500 -3,-1.500" fill="none" stroke="#444" stroke-width="1.100"/><ellipse cx="222.500" cy="7.500" rx="2.600" ry="2" fill="#f4f4f4" stroke="#444" stroke-width="0.900"/><ellipse cx="228" cy="5.500" rx="2.400" ry="1.800" fill="#f4f4f4" stroke="#444" stroke-width="0.900"/><circle cx="241" cy="5.500" r="2.800" fill="#d8e8fc" stroke="#3a7ad0" stroke-width="1"/><path d="M240,8.500 h2 v2.500 h-2z" fill="#5a8ad0"/><path d="M254.500,8 a3.500,3.500 0 0 1 3,-5.500 a3,3 0 0 1 5,1" fill="#cfe8d0" stroke="#2a7ad0" stroke-width="1.300"/><rect x="254.500" y="6.500" width="5" height="5" fill="#58b068" stroke="#2a7a3a" stroke-width="0.700"/><path d="M259.500,6 l6,6 m0,-6 l-6,6" stroke="#e02020" stroke-width="1.700"/><rect x="272.500" y="3.500" width="11" height="8.500" fill="#ececec" stroke="#333" stroke-dasharray="2 1" stroke-width="1.300"/><path d="M275,6 h5 v3.500 h-5z" fill="#555"/><circle cx="283" cy="10.500" r="1.800" fill="#e8e8e8" stroke="#555" stroke-width="0.600"/><path d="M291,8 c0,-5 11,-5 11,0 v4.500 h-11z" fill="#e0e0e0" stroke="#444" stroke-width="1"/><path d="M293.500,8 v4.500 M296.500,8 v4.500" stroke="#a03030" stroke-width="1.200"/><path d="M299,8 v4.500" stroke="#444"/><circle cx="302.500" cy="9" r="2.400" fill="#d8ecff" stroke="#2a7ad8" stroke-width="0.900"/><rect x="310" y="6.500" width="8" height="6" fill="#f4f4f4" stroke="#555"/><path d="M312,6.500 v-2 h8 v6 h-2 M314,4.500 v-2 h8 v6 h-2" fill="none" stroke="#555"/></svg>
<div id="status"><div class="msg">单击可进行选择; 按 <u>Tab</u> 键并单击可选择其他项目; 按 <u>Ctrl</u> 键并单击可将新项目添加到选择集; 按 <u>Shift</u> 键</div></div>
<svg class="abs" style="left:490px;top:734px" width="19" height="18" viewBox="0 0 19 18"><path d="M5,4 a3,3 0 0 1 6,0 v4 M3,9 h4 v7 h-4z M9,7 h4 v9 h-4z" fill="#dbe8f8" stroke="#2a4a88" stroke-width="1.100"/><circle cx="13.500" cy="5" r="2.500" fill="#58c048" stroke="#2a7a20" stroke-width="0.700"/></svg>
<div class="combo" style="left:510px;width:186px;color:#111"><span style="position:absolute;left:4px;top:0">设备</span></div>
<div class="dd" style="left:683.5px;top:741.5px;border-left-width:3.5px;border-right-width:3.5px;border-top-width:4px;border-top-color:#111"></div>
<svg class="abs" style="left:700px;top:735px" width="34" height="17" viewBox="0 0 34 17"><path d="M4,13 L9,3 M9,3 a2,2 0 1 1 3,2 M2,13.500 h7" fill="none" stroke="#333" stroke-width="1.200"/><text x="16" y="13" font-family="Liberation Sans,sans-serif" font-size="11.500" fill="#111">:0</text></svg>
<svg class="abs" style="left:746px;top:735px" width="42" height="17" viewBox="0 0 42 17"><rect x="1.500" y="2.500" width="13" height="12" fill="#f8f8f8" stroke="#333" stroke-width="1.200"/><path d="M3.500,5.500 h9" stroke="#333" stroke-width="1.500"/><path d="M4,9 h2 M4,12 h2 M7.500,9 h5 M7.500,12 h5" stroke="#555"/><rect x="24.500" y="2.500" width="13" height="12" fill="#8a8a8a" stroke="#b4b4b4"/><path d="M28,11 L34,5 M28,11 h4" stroke="#e8e8e8" stroke-width="1.200" fill="none"/></svg>
<div class="combo" style="left:790px;width:143px;color:#8a8a8a"><span style="position:absolute;left:3px;top:0">主模型</span></div>
<div class="dd" style="left:918.5px;top:741.5px;border-left-width:3.5px;border-right-width:3.5px;border-top-width:4px;border-top-color:#a8a8a8"></div>
<div class="abs" style="left:1001.500px;top:738px;width:12px;height:12px;background:#fff;border:1px solid #444;box-sizing:border-box"></div>
<div class="abs" style="left:1016px;top:737px;font-size:10.6px;line-height:15px;color:#111;white-space:nowrap">仅可编辑项</div>
<svg class="abs" style="left:1070px;top:733px" width="160" height="20" viewBox="1070 0 160 20"><path d="M1076.500,7 a3,3 0 1 1 4.500,2 M1081,6 a3,3 0 1 1 5,3" fill="none" stroke="#e8a01c" stroke-width="1.800"/><path d="M1081,8 v9 l2.500,-2.500 l2,4 l1.500,-0.800 l-2,-4 h3.500z" fill="#fff" stroke="#222" stroke-width="0.800"/><path d="M1099,12 L1107,6 H1113 M1099,12 h10 M1100,15 h8" fill="none" stroke="#2a5ab8" stroke-width="1.300"/><path d="M1108,8 v9 l2.500,-2.500 l2,4 l1.500,-0.800 l-2,-4 h3.500z" fill="#fff" stroke="#222" stroke-width="0.800"/><rect x="1123" y="5" width="7" height="5" fill="#f0a040" stroke="#b06a10"/><path d="M1126.500,10 v7 M1123.500,13 h6" stroke="#b06a10"/><path d="M1132,4 l5,5 m0,-5 l-5,5" stroke="#e02020" stroke-width="1.700"/><path d="M1131,10 v8 l2.500,-2.500 l2,4 l1.500,-0.800 l-2,-4 h3z" fill="#fff" stroke="#222" stroke-width="0.800"/><path d="M1146.500,7 l5,-1.500 v11 l-5,1.500z" fill="#d4e4fa" stroke="#2a5ab8" stroke-width="1.200"/><path d="M1155,4 l5,5 m0,-5 l-5,5" stroke="#e02020" stroke-width="1.700"/><path d="M1154,10 v8 l2.500,-2.500 l2,4 l1.500,-0.800 l-2,-4 h3z" fill="#fff" stroke="#222" stroke-width="0.800"/><path d="M1172,4 v7 M1168.500,7.500 h7" stroke="#222" stroke-width="1.200"/><path d="M1172,3 l-1.500,2 h3z M1172,12 l-1.500,-2 h3z M1168,7.500 l2,-1.500 v3z M1176,7.500 l-2,-1.500 v3z" fill="#222"/><path d="M1177,9 v9 l2.500,-2.500 l2,4 l1.500,-0.800 l-2,-4 h3.500z" fill="#fff" stroke="#222" stroke-width="0.800"/><path d="M1188.500,5.500 h13 l-5,6.500 v6 l-3,-1.500 v-4.500z" fill="#f4f4f4" stroke="#333" stroke-width="1.100"/><text x="1203.500" y="18" font-family="Liberation Sans,sans-serif" font-size="10.500" fill="#111">:1</text></svg>
<div id="view"><svg width="1047" height="575" viewBox="210 140 1047 575" shape-rendering="crispEdges">
<defs><linearGradient id="pg" x1="0" y1="0" x2="1" y2="0"><stop offset="0" stop-color="#6e421c"/><stop offset="0.3" stop-color="#c47e36"/><stop offset="0.62" stop-color="#d48c42"/><stop offset="1" stop-color="#8f5a28"/></linearGradient><linearGradient id="hg" x1="0" y1="0" x2="0.35" y2="1"><stop offset="0" stop-color="#2c762c"/><stop offset="0.45" stop-color="#34503a"/><stop offset="1" stop-color="#3b3d3b"/></linearGradient></defs>
<rect x="210" y="140" width="1047" height="575" fill="#000"/>
<polygon points="210,369 404,398 404,640 210,604" fill="#6e5545"/>
<line x1="210" y1="369" x2="404" y2="398" stroke="#ffffff" stroke-width="1"/>
<polygon points="780,459 865,472.7 1258,535.6 1258,658.5 1196,716 780,716" fill="#6e5545"/>
<line x1="865" y1="472.7" x2="1258" y2="535.6" stroke="#f0ece8" stroke-width="1"/>
<line x1="1258" y1="658.5" x2="1196" y2="716" stroke="#f0ece8" stroke-width="1"/>
<line x1="1258" y1="650" x2="1187.5" y2="716" stroke="#f0ece8" stroke-width="1"/>
<line x1="1055" y1="139" x2="1209.5" y2="163" stroke="#182f88" stroke-width="1"/>
<line x1="1209.5" y1="163" x2="1237" y2="139" stroke="#182f88" stroke-width="1"/>
<line x1="1210.3" y1="163" x2="1210.3" y2="716" stroke="#1a3290" stroke-width="1.2"/>
<line x1="210" y1="699.5" x2="313" y2="716" stroke="#182f88" stroke-width="1"/>
<path d="M380,587 C380,596 377,607 371.4,617 L366,627 L366,618 Z" fill="#bdbdbd"/>
<polygon points="268.4,602 365.8,617.8 365.8,627 268.4,612.5" fill="#6a6a6a"/>
<rect x="328.6" y="617.4" width="2" height="2" fill="#ffffff"/>
<rect x="349" y="620.7" width="1" height="1" fill="#ffffff"/>
<rect x="354.7" y="617.7" width="1.5" height="1.5" fill="#e0e0e0"/>
<rect x="305.8" y="609.7" width="1" height="1" fill="#ffffff"/>
<rect x="338.7" y="616.9" width="1" height="1" fill="#ffffff"/>
<rect x="285" y="611.1" width="1" height="1" fill="#ffffff"/>
<rect x="281.9" y="605.2" width="1" height="1" fill="#e0e0e0"/>
<rect x="342.7" y="620.9" width="1" height="1" fill="#e0e0e0"/>
<rect x="297.2" y="614.1" width="2" height="2" fill="#e0e0e0"/>
<rect x="287.1" y="612.6" width="1" height="1" fill="#ffffff"/>
<rect x="298.1" y="610.2" width="1" height="1" fill="#e0e0e0"/>
<rect x="294.8" y="609.5" width="2" height="2" fill="#ffffff"/>
<rect x="326" y="616.8" width="1" height="1" fill="#c8c8c8"/>
<rect x="303.4" y="610.7" width="1" height="1" fill="#e0e0e0"/>
<rect x="315.2" y="615.1" width="1" height="1" fill="#c8c8c8"/>
<rect x="361.7" y="618.2" width="1" height="1" fill="#ffffff"/>
<rect x="271.7" y="609" width="1" height="1" fill="#ffffff"/>
<rect x="324.4" y="612.1" width="1" height="1" fill="#e0e0e0"/>
<rect x="328.6" y="618.7" width="1" height="1" fill="#e0e0e0"/>
<rect x="357.4" y="623" width="1" height="1" fill="#c8c8c8"/>
<rect x="353.9" y="618.4" width="1.5" height="1.5" fill="#ffffff"/>
<rect x="325.4" y="617.2" width="1" height="1" fill="#c8c8c8"/>
<rect x="273.4" y="610.4" width="1" height="1" fill="#e0e0e0"/>
<rect x="302" y="612.5" width="1" height="1" fill="#c8c8c8"/>
<rect x="295.9" y="612.1" width="1" height="1" fill="#c8c8c8"/>
<rect x="334.5" y="615.6" width="1" height="1" fill="#e0e0e0"/>
<rect x="337.8" y="616.1" width="1.5" height="1.5" fill="#e0e0e0"/>
<rect x="337.7" y="614.7" width="2" height="2" fill="#ffffff"/>
<path d="M210.7,558.6 L250.4,521.7 C270,523.5 290,527 299.6,530.3 C315,535 328,539.5 337.4,543.5 C352,550 362,557 367.6,562.4 C376,570 380,578 380,587 C380,596 377,607 371.4,617 L365.8,618.2 L268.4,602 C275,598 276,593 274,589 C272.5,584 270,580.5 267.4,577.5 C263,573 258,570 252.3,568 C246,565.5 240,564 233.4,562.4 C226,560.8 218,559.5 210.7,558.6 Z" fill="#d6d6d6" stroke="#f2f2f2" stroke-width="0.8"/>
<path d="M268.4,602 C275,598 276,593 274,589 C272.5,584 270,580.5 267.4,577.5 C263,573 258,570 252.3,568 C246,565.5 240,564 233.4,562.4 L233.4,564.5 C244,567 256,571 264,578 C271,585 273,594 268.4,604 Z" fill="#a8a8a8"/>
<polygon points="380,598 403,579.5 403,603.5" fill="#d0d0d0" stroke="#f4f4f4" stroke-width="0.8"/>
<polygon points="384.7,631 403,613.5 403,634" fill="#d0d0d0"/>
<polygon points="716,140 865.3,140 865.3,471.5 852.6,481.8 852.6,629.5 789,693.5 782,697 782,230" fill="#bd8287"/>
<polygon points="852.6,481.8 865.3,471.5 884.9,475.9 852.6,506.5" fill="#d9d9d9"/>
<line x1="865.3" y1="471.5" x2="884.9" y2="475.9" stroke="#ffffff" stroke-width="0.8"/>
<polygon points="853,629.5 877,633 811,697.5 789,694" fill="#d8d8d8" stroke="#ffffff" stroke-width="0.8"/>
<line x1="797.3" y1="227.4" x2="797.3" y2="686" stroke="#ffffff" stroke-width="0.9"/>
<line x1="809" y1="216.2" x2="809" y2="674" stroke="#ffffff" stroke-width="0.9"/>
<line x1="816" y1="209.5" x2="816" y2="667" stroke="#ffffff" stroke-width="0.9"/>
<line x1="818" y1="207.6" x2="818" y2="665" stroke="#ffffff" stroke-width="0.9"/>
<line x1="828.7" y1="197.4" x2="828.7" y2="654" stroke="#ffffff" stroke-width="0.9"/>
<line x1="836.6" y1="189.8" x2="836.6" y2="647" stroke="#ffffff" stroke-width="0.9"/>
<line x1="852.6" y1="174.5" x2="852.6" y2="630" stroke="#ffffff" stroke-width="0.9"/>
<line x1="814.8" y1="210.7" x2="814.8" y2="668" stroke="#4a2a30" stroke-width="1"/>
<line x1="835.6" y1="190.8" x2="835.6" y2="648" stroke="#4a2a30" stroke-width="1"/>
<line x1="789.3" y1="232" x2="789.3" y2="694" stroke="#ffffff" stroke-width="0.9"/>
<line x1="864.8" y1="140" x2="864.8" y2="471.5" stroke="#ffffff" stroke-width="0.9"/>
<polyline points="789.3,316.8 809,300.7 809,299.2 816,293.5 816,295 828.7,284.6 828.7,283.1 835,277.9 835,279.4 852.6,265" fill="none" stroke="#ffffff" stroke-width="0.9"/>
<polyline points="789.3,408.5 809,391.1 809,389.6 816,383.5 816,385 828.7,373.8 828.7,372.3 835,366.7 835,368.2 852.6,352.7" fill="none" stroke="#ffffff" stroke-width="0.9"/>
<polyline points="789.3,497 809,478.6 809,477.1 816,470.6 816,472.1 828.7,460.3 828.7,458.8 835,452.9 835,454.4 852.6,438" fill="none" stroke="#ffffff" stroke-width="0.9"/>
<polyline points="789.3,583.5 809,565 809,563.5 816,556.9 816,558.4 828.7,546.5 828.7,545 835,539 835,540.5 852.6,524" fill="none" stroke="#ffffff" stroke-width="0.9"/>
<line x1="852.6" y1="198.5" x2="865" y2="187.9" stroke="#ffffff" stroke-width="0.9"/>
<line x1="852.6" y1="285" x2="865" y2="274.4" stroke="#ffffff" stroke-width="0.9"/>
<line x1="852.6" y1="371" x2="865" y2="360.4" stroke="#ffffff" stroke-width="0.9"/>
<line x1="852.6" y1="472" x2="865" y2="461.4" stroke="#ffffff" stroke-width="0.9"/>
<polygon points="853.3,217 860.6,212 860.6,249 853.3,254" fill="#f4f4f4"/>
<polygon points="854.6,218.5 856.4,217 856.4,250 854.6,251.5" fill="#3a2a30"/>
<polygon points="857.6,216 859.4,214.6 859.4,247.5 857.6,249" fill="#3a2a30"/>
<polygon points="853.3,305.5 860.6,300.5 860.6,340 853.3,345" fill="#f4f4f4"/>
<polygon points="854.6,307 856.4,305.5 856.4,341 854.6,342.5" fill="#3a2a30"/>
<polygon points="857.6,304.5 859.4,303.1 859.4,338.5 857.6,340" fill="#3a2a30"/>
<polygon points="853.3,398.5 860.6,393.5 860.6,437.5 853.3,442.5" fill="#f4f4f4"/>
<polygon points="854.6,400 856.4,398.5 856.4,438.5 854.6,440" fill="#3a2a30"/>
<polygon points="857.6,397.5 859.4,396.1 859.4,436 857.6,437.5" fill="#3a2a30"/>
<polygon points="853.3,140 860.6,140 860.6,166 853.3,172" fill="#f4f4f4"/>
<polygon points="854.6,140 856.4,140 856.4,168 854.6,169.5" fill="#3a2a30"/>
<polygon points="857.6,140 859.4,140 859.4,165.5 857.6,167" fill="#3a2a30"/>
<line x1="740" y1="140" x2="754" y2="156" stroke="#ffffff" stroke-width="0.8"/>
<line x1="770" y1="140" x2="784" y2="156" stroke="#ffffff" stroke-width="0.8"/>
<line x1="800" y1="140" x2="814" y2="156" stroke="#ffffff" stroke-width="0.8"/>
<line x1="827" y1="140" x2="841" y2="156" stroke="#ffffff" stroke-width="0.8"/>
<line x1="841" y1="140" x2="855" y2="156" stroke="#ffffff" stroke-width="0.8"/>
<rect x="767" y="140" width="8" height="4.5" fill="#f2f2f2"/>
<rect x="781" y="140" width="14" height="6.5" fill="#f2f2f2"/>
<rect x="784.5" y="140" width="2.5" height="5" fill="#c38b8e"/>
<rect x="789.5" y="140" width="2.5" height="5.5" fill="#c38b8e"/>
<rect x="846" y="140" width="4.5" height="12.5" fill="#000"/>
<line x1="845.5" y1="140" x2="845.5" y2="154" stroke="#ffffff" stroke-width="0.8"/>
<polygon points="780,213.7 790.3,213.7 849.6,159.4 838,159.4" fill="#c9797f" stroke="#ffffff" stroke-width="0.6"/>
<polygon points="790.3,213.7 849.6,159.4 850.8,175.8 791.5,232.6" fill="#8f8f8f" stroke="#ffffff" stroke-width="0.6"/>
<polygon points="780,213.7 790.3,213.7 791.5,232.6 782,232" fill="#52333a" stroke="#ffffff" stroke-width="0.6"/>
<polygon points="404.5,168 433,140 699,140 699,150.6 825,171 781,214.5 782,231" fill="#d4d4d4"/>
<polygon points="699,140 708,140 838,160 825,171 699,150.6" fill="#52333a"/>
<polygon points="706,140 719,140 850,159.4 838,160.4" fill="#c9797f" stroke="#ffffff" stroke-width="0.6"/>
<line x1="699" y1="150.6" x2="825" y2="171" stroke="#ffffff" stroke-width="0.8"/>
<line x1="825" y1="171" x2="781" y2="214.5" stroke="#ffffff" stroke-width="0.8"/>
<polygon points="406,153.3 420.6,140 433.2,140 406,166.5" fill="#8e8e8e"/>
<polygon points="406.6,140 419.2,140 406.6,149.3" fill="#257d25"/>
<line x1="406.2" y1="140" x2="406.2" y2="150" stroke="#e8e8e8" stroke-width="0.8"/>
<line x1="402.6" y1="153.3" x2="420.6" y2="139.8" stroke="#f0f0f0" stroke-width="1"/>
<line x1="406" y1="166.5" x2="433.2" y2="140" stroke="#e4e4e4" stroke-width="0.8"/>
<rect x="402.6" y="153.3" width="3.4" height="20" fill="#b6b6b6"/>
<line x1="478" y1="140" x2="486" y2="141.6" stroke="#888" stroke-width="1"/>
<polygon points="404,167.6 782,230 782,235.5 404,172.8" fill="#5e5e5e"/>
<rect x="575.2" y="198.7" width="1.5" height="1.5" fill="#ffffff"/>
<rect x="595.9" y="202.3" width="1" height="1" fill="#ffffff"/>
<rect x="641.6" y="210.5" width="1" height="1" fill="#ffffff"/>
<rect x="519.5" y="188" width="1" height="1" fill="#ffffff"/>
<rect x="766.8" y="230.7" width="2" height="2" fill="#e0e0e0"/>
<rect x="639.1" y="210.2" width="1" height="1" fill="#ffffff"/>
<rect x="419.3" y="174.1" width="2" height="2" fill="#ffffff"/>
<rect x="697" y="218.1" width="2" height="2" fill="#e0e0e0"/>
<rect x="600.2" y="203.1" width="1.5" height="1.5" fill="#ffffff"/>
<rect x="653.8" y="211.4" width="1" height="1" fill="#ffffff"/>
<rect x="779.1" y="233.9" width="1" height="1" fill="#c8c8c8"/>
<rect x="523.9" y="189.2" width="1" height="1" fill="#ffffff"/>
<rect x="432.3" y="175.9" width="1.5" height="1.5" fill="#ffffff"/>
<rect x="722.6" y="222.5" width="1" height="1" fill="#ffffff"/>
<rect x="485.8" y="185.3" width="1" height="1" fill="#ffffff"/>
<rect x="546.4" y="194.5" width="1.5" height="1.5" fill="#ffffff"/>
<rect x="617.8" y="204.5" width="1" height="1" fill="#c8c8c8"/>
<rect x="438.6" y="175.4" width="1.5" height="1.5" fill="#ffffff"/>
<rect x="456.3" y="179.6" width="1" height="1" fill="#ffffff"/>
<rect x="579.9" y="199.3" width="2" height="2" fill="#e0e0e0"/>
<rect x="573.3" y="197.2" width="1" height="1" fill="#ffffff"/>
<rect x="646.7" y="209" width="1.5" height="1.5" fill="#e0e0e0"/>
<rect x="406.2" y="171.9" width="2" height="2" fill="#c8c8c8"/>
<rect x="779.2" y="230.6" width="1" height="1" fill="#ffffff"/>
<rect x="778.4" y="232.4" width="2" height="2" fill="#ffffff"/>
<rect x="421.7" y="172" width="1.5" height="1.5" fill="#c8c8c8"/>
<rect x="409.6" y="171.6" width="1" height="1" fill="#ffffff"/>
<rect x="433.5" y="173.8" width="2" height="2" fill="#e0e0e0"/>
<rect x="411.8" y="171.1" width="2" height="2" fill="#ffffff"/>
<rect x="453.6" y="178.8" width="2" height="2" fill="#e0e0e0"/>
<rect x="730.1" y="223" width="1" height="1" fill="#c8c8c8"/>
<rect x="745.8" y="227.8" width="1" height="1" fill="#e0e0e0"/>
<rect x="465.3" y="180.8" width="2" height="2" fill="#e0e0e0"/>
<rect x="662.9" y="212.6" width="1.5" height="1.5" fill="#ffffff"/>
<rect x="563.6" y="195.3" width="1" height="1" fill="#c8c8c8"/>
<rect x="495.2" y="186" width="1" height="1" fill="#ffffff"/>
<rect x="714.1" y="221.8" width="1" height="1" fill="#e0e0e0"/>
<rect x="753.5" y="229.6" width="1" height="1" fill="#e0e0e0"/>
<rect x="585.3" y="200.7" width="2" height="2" fill="#ffffff"/>
<rect x="510.8" y="189.3" width="1" height="1" fill="#ffffff"/>
<rect x="431.9" y="174.6" width="1" height="1" fill="#ffffff"/>
<rect x="423.4" y="172.8" width="2" height="2" fill="#e0e0e0"/>
<rect x="440.5" y="175.1" width="1.5" height="1.5" fill="#c8c8c8"/>
<rect x="651.7" y="211.8" width="2" height="2" fill="#e0e0e0"/>
<rect x="626.6" y="208.5" width="1.5" height="1.5" fill="#c8c8c8"/>
<line x1="404" y1="167.6" x2="782" y2="230" stroke="#f0f0f0" stroke-width="0.8"/>
<line x1="404" y1="173.3" x2="782" y2="236" stroke="#ffffff" stroke-width="0.8"/>
<polygon points="445,201.2 586,221.6 587,290.2 409,260.8" fill="#d6d6d6"/>
<polygon points="404,173.6 445,181.7 445,201.2 409.5,260.9 404,260" fill="#ececec"/>
<polygon points="409,174.6 445,181.7 445,184.7 433,182.6 412,179.1 409,178.6" fill="#888888"/>
<polygon points="404,173.6 409,174.4 409,259.8 404,259" fill="#257d25"/>
<rect x="405.6" y="185.6" width="2.6" height="70.4" fill="#3c403c"/>
<rect x="403.2" y="173.6" width="1.1" height="86.4" fill="#e8e8e8"/>
<polygon points="412,179.1 433,182.6 433,228 412,255.6" fill="#f6f6f6"/>
<polygon points="412.6,179.8 421,181.2 412.6,189.6" fill="#888888"/>
<polygon points="415,188.1 417.7,185.6 417.7,235 415,238.5" fill="#257d25"/>
<polygon points="421,182.6 424,183.1 424,227.5 421,231.5" fill="#257d25"/>
<polygon points="427,184.1 429.4,184.6 429.4,222 427,225" fill="#cfe8dc"/>
<line x1="412" y1="197.6" x2="426" y2="187.6" stroke="#f6f6f6" stroke-width="1.3"/>
<line x1="413" y1="224" x2="433" y2="208" stroke="#f6f6f6" stroke-width="1.5"/>
<line x1="419.3" y1="180.6" x2="419.3" y2="246" stroke="#ffffff" stroke-width="1"/>
<line x1="425.6" y1="181.6" x2="425.6" y2="237.5" stroke="#ffffff" stroke-width="1"/>
<polygon points="434,181.6 445,183.7 445,225 434,232" fill="#8a8a8a" stroke="#e6e6e6" stroke-width="0.6"/>
<line x1="437" y1="182.6" x2="437" y2="230" stroke="#d8d8d8" stroke-width="0.6"/>
<polygon points="424,235.5 434,226.5 434,233 424,243.5" fill="#8a8a8a" stroke="#f0f0f0" stroke-width="0.5"/>
<polygon points="412.6,250 416,246.5 416,252.5 412.6,256.5" fill="#9a9a9a" stroke="#f8f8f8" stroke-width="0.5"/>
<line x1="412" y1="248" x2="434" y2="226" stroke="#dcdcdc" stroke-width="0.7"/>
<polygon points="409,174 586,203.2 586,202.6 445,182.2 409,176" fill="#a4a4a4"/>
<polygon points="445,181.7 458,183.6 458,203.1 445,201.2" fill="#257d25"/>
<polygon points="458,183.6 472,185.6 472,210.1 458,208.1" fill="#8a8a12"/>
<polygon points="472,185.6 474,185.9 474,205.4 472,205.1" fill="#e8e860"/>
<polygon points="474,185.9 494,188.8 494,208.3 474,205.4" fill="#257d25"/>
<polygon points="494,188.8 507,190.7 507,215.2 494,213.3" fill="#8a8a12"/>
<polygon points="507,190.7 510,191.1 510,215.6 507,215.2" fill="#f2f200"/>
<polygon points="510,191.1 585.5,202 585.5,221.5 510,210.6" fill="#52333a"/>
<line x1="475" y1="187" x2="475" y2="204.5" stroke="#1f6a1f" stroke-width="0.7"/>
<line x1="477" y1="187.3" x2="477" y2="204.8" stroke="#1f6a1f" stroke-width="0.7"/>
<line x1="479" y1="187.6" x2="479" y2="205.1" stroke="#1f6a1f" stroke-width="0.7"/>
<line x1="481" y1="187.9" x2="481" y2="205.4" stroke="#1f6a1f" stroke-width="0.7"/>
<line x1="483" y1="188.2" x2="483" y2="205.7" stroke="#1f6a1f" stroke-width="0.7"/>
<line x1="485" y1="188.5" x2="485" y2="206" stroke="#1f6a1f" stroke-width="0.7"/>
<line x1="487" y1="188.8" x2="487" y2="206.3" stroke="#1f6a1f" stroke-width="0.7"/>
<line x1="489" y1="189" x2="489" y2="206.5" stroke="#1f6a1f" stroke-width="0.7"/>
<line x1="491" y1="189.3" x2="491" y2="206.8" stroke="#1f6a1f" stroke-width="0.7"/>
<line x1="493" y1="189.6" x2="493" y2="207.1" stroke="#1f6a1f" stroke-width="0.7"/>
<polygon points="541,197.6 557,199.9 557,215.4 541,213.1" fill="#ffffff"/>
<polyline points="532,196.8 541,199.1" fill="none" stroke="#ffffff" stroke-width="1"/>
<polyline points="534,212.6 541,213.6" fill="none" stroke="#ffffff" stroke-width="1"/>
<line x1="445" y1="201.2" x2="585.5" y2="221.5" stroke="#f0f0f0" stroke-width="0.8"/>
<line x1="445" y1="181.7" x2="585.5" y2="202" stroke="#e0e0e0" stroke-width="0.6"/>
<polygon points="590,205.7 627,210.7 627,253.6 590,289" fill="#bd8287"/>
<polygon points="627,253.6 647.5,236 647.5,300 590,290.5" fill="#d6d6d6"/>
<polygon points="628,211 643,213.5 643,240 628,253" fill="#888888" stroke="#ffffff" stroke-width="0.7"/>
<line x1="635" y1="212" x2="635" y2="247" stroke="#e8e8e8" stroke-width="0.7"/>
<polygon points="643,213.5 647.5,214 647.5,236 643,240" fill="#d6d6d6"/>
<line x1="613" y1="234" x2="636" y2="213" stroke="#a2ee22" stroke-width="3"/>
<line x1="612" y1="235.5" x2="637" y2="212.5" stroke="#ffffff" stroke-width="0.5"/>
<line x1="590" y1="289" x2="627" y2="253.6" stroke="#ffffff" stroke-width="0.8"/>
<rect x="585.5" y="202.6" width="4.5" height="92" fill="#52333a"/>
<line x1="586" y1="214" x2="590" y2="212" stroke="#ffffff" stroke-width="0.6"/>
<line x1="586" y1="223" x2="590" y2="221" stroke="#ffffff" stroke-width="0.6"/>
<line x1="586" y1="232" x2="590" y2="230" stroke="#ffffff" stroke-width="0.6"/>
<line x1="586" y1="241" x2="590" y2="239" stroke="#ffffff" stroke-width="0.6"/>
<line x1="586" y1="250" x2="590" y2="248" stroke="#ffffff" stroke-width="0.6"/>
<line x1="586" y1="259" x2="590" y2="257" stroke="#ffffff" stroke-width="0.6"/>
<line x1="586" y1="268" x2="590" y2="266" stroke="#ffffff" stroke-width="0.6"/>
<line x1="586" y1="277" x2="590" y2="275" stroke="#ffffff" stroke-width="0.6"/>
<line x1="586" y1="286" x2="590" y2="284" stroke="#ffffff" stroke-width="0.6"/>
<polygon points="652,214.5 668.5,217.2 668.5,285.1 653,299.6" fill="#bd8287"/>
<polygon points="668.5,217.2 782,236 782,302.3 668.5,285.1" fill="#52333a"/>
<polygon points="668.5,285.1 653,299.6 782,320.9 782,302.3" fill="#d6d6d6"/>
<line x1="668.5" y1="285.1" x2="782" y2="302.3" stroke="#f2f2f2" stroke-width="0.8"/>
<line x1="668.5" y1="219.2" x2="668.5" y2="285.1" stroke="#f2f2f2" stroke-width="0.8"/>
<polygon points="674.5,234.4 696.5,236.9 696.5,289.4 674.5,286.4" fill="none" stroke="#f2f2f2" stroke-width="1.6"/>
<polygon points="677,236.9 694,238.9 694,288.5 677,285.9" fill="#3c3c3c"/>
<rect x="691.5" y="265.4" width="1.5" height="1.5" fill="#ddd"/>
<polygon points="768.5,249.8 781.5,251.3 781.5,302.8 768.5,301.3" fill="none" stroke="#f2f2f2" stroke-width="1.5"/>
<polygon points="771.5,252.3 780.5,253.3 780.5,301.8 771.5,300.8" fill="#3c3c3c"/>
<polyline points="772,278.8 774.5,276.8 775,279.8" fill="none" stroke="#eee" stroke-width="0.8"/>
<polygon points="706,275.3 716,272.1 757,278.8 749,283.5" fill="#f6f6f6"/>
<ellipse cx="718.5" cy="277.3" rx="5" ry="1.9" fill="#7a686c" stroke="#fff" stroke-width="0.5" transform="rotate(9 718.5 277.3)"/>
<ellipse cx="732" cy="279.5" rx="5" ry="1.9" fill="#7a686c" stroke="#fff" stroke-width="0.5" transform="rotate(9 732 279.5)"/>
<ellipse cx="746" cy="281.8" rx="5" ry="1.9" fill="#7a686c" stroke="#fff" stroke-width="0.5" transform="rotate(9 746 281.8)"/>
<line x1="716" y1="279.3" x2="716" y2="291.3" stroke="#ffffff" stroke-width="1.5"/>
<line x1="731.5" y1="281.9" x2="731.5" y2="294.3" stroke="#ffffff" stroke-width="1.5"/>
<line x1="748" y1="284.6" x2="748" y2="297.5" stroke="#ffffff" stroke-width="1.5"/>
<line x1="716" y1="285.8" x2="748" y2="291.3" stroke="#ffffff" stroke-width="1.2"/>
<polygon points="653,299.6 782,320.9 782,324.5 653,303.2" fill="#858585"/>
<line x1="653" y1="299.6" x2="782" y2="320.9" stroke="#f6f6f6" stroke-width="0.8"/>
<line x1="653" y1="303.2" x2="782" y2="324.5" stroke="#f6f6f6" stroke-width="0.8"/>
<polygon points="445,290.9 586,311.2 587,378 409,348.8" fill="#d6d6d6"/>
<polygon points="404,262 445,271.4 445,290.9 409.5,348.9 404,348" fill="#ececec"/>
<polygon points="409,263 445,271.4 445,274.4 433,271 412,267.5 409,267" fill="#888888"/>
<polygon points="404,262 409,262.8 409,347.8 404,347" fill="#257d25"/>
<rect x="405.6" y="274" width="2.6" height="70" fill="#3c403c"/>
<rect x="403.2" y="262" width="1.1" height="86" fill="#e8e8e8"/>
<polygon points="412,267.5 433,271 433,316 412,343.6" fill="#f6f6f6"/>
<polygon points="412.6,268.2 421,269.6 412.6,278" fill="#888888"/>
<polygon points="415,276.5 417.7,274 417.7,323 415,326.5" fill="#257d25"/>
<polygon points="421,271 424,271.5 424,315.5 421,319.5" fill="#257d25"/>
<polygon points="427,272.5 429.4,273 429.4,310 427,313" fill="#cfe8dc"/>
<line x1="412" y1="286" x2="426" y2="276" stroke="#f6f6f6" stroke-width="1.3"/>
<line x1="413" y1="312" x2="433" y2="296" stroke="#f6f6f6" stroke-width="1.5"/>
<line x1="419.3" y1="269" x2="419.3" y2="334" stroke="#ffffff" stroke-width="1"/>
<line x1="425.6" y1="270" x2="425.6" y2="325.5" stroke="#ffffff" stroke-width="1"/>
<polygon points="434,270 445,273.4 445,313 434,320" fill="#8a8a8a" stroke="#e6e6e6" stroke-width="0.6"/>
<line x1="437" y1="271" x2="437" y2="318" stroke="#d8d8d8" stroke-width="0.6"/>
<polygon points="424,323.5 434,314.5 434,321 424,331.5" fill="#8a8a8a" stroke="#f0f0f0" stroke-width="0.5"/>
<polygon points="412.6,338 416,334.5 416,340.5 412.6,344.5" fill="#9a9a9a" stroke="#f8f8f8" stroke-width="0.5"/>
<line x1="412" y1="336" x2="434" y2="314" stroke="#dcdcdc" stroke-width="0.7"/>
<polygon points="409,261.8 586,291 586,292.2 445,271.9 409,263.8" fill="#a4a4a4"/>
<polygon points="445,271.4 458,273.2 458,292.7 445,290.9" fill="#257d25"/>
<polygon points="458,273.2 472,275.3 472,299.8 458,297.7" fill="#8a8a12"/>
<polygon points="472,275.3 474,275.5 474,295 472,294.8" fill="#e8e860"/>
<polygon points="474,275.5 494,278.4 494,297.9 474,295" fill="#257d25"/>
<polygon points="494,278.4 507,280.3 507,304.8 494,302.9" fill="#8a8a12"/>
<polygon points="507,280.3 510,280.7 510,305.2 507,304.8" fill="#f2f200"/>
<polygon points="510,280.7 585.5,291.6 585.5,311.1 510,300.2" fill="#52333a"/>
<line x1="475" y1="276.7" x2="475" y2="294.2" stroke="#1f6a1f" stroke-width="0.7"/>
<line x1="477" y1="277" x2="477" y2="294.5" stroke="#1f6a1f" stroke-width="0.7"/>
<line x1="479" y1="277.3" x2="479" y2="294.8" stroke="#1f6a1f" stroke-width="0.7"/>
<line x1="481" y1="277.6" x2="481" y2="295.1" stroke="#1f6a1f" stroke-width="0.7"/>
<line x1="483" y1="277.8" x2="483" y2="295.3" stroke="#1f6a1f" stroke-width="0.7"/>
<line x1="485" y1="278.1" x2="485" y2="295.6" stroke="#1f6a1f" stroke-width="0.7"/>
<line x1="487" y1="278.4" x2="487" y2="295.9" stroke="#1f6a1f" stroke-width="0.7"/>
<line x1="489" y1="278.7" x2="489" y2="296.2" stroke="#1f6a1f" stroke-width="0.7"/>
<line x1="491" y1="279" x2="491" y2="296.5" stroke="#1f6a1f" stroke-width="0.7"/>
<line x1="493" y1="279.3" x2="493" y2="296.8" stroke="#1f6a1f" stroke-width="0.7"/>
<polygon points="541,287.2 557,289.5 557,305 541,302.7" fill="#ffffff"/>
<polyline points="532,286.4 541,288.7" fill="none" stroke="#ffffff" stroke-width="1"/>
<polyline points="534,302.2 541,303.2" fill="none" stroke="#ffffff" stroke-width="1"/>
<line x1="445" y1="290.9" x2="585.5" y2="311.1" stroke="#f0f0f0" stroke-width="0.8"/>
<line x1="445" y1="271.4" x2="585.5" y2="291.6" stroke="#e0e0e0" stroke-width="0.6"/>
<polygon points="588,291.9 635.5,299.7 635.5,334 600,369.1 588,376.2" fill="#bd8287"/>
<polygon points="635.5,334 648,324 648,387 588,377.2 600,369.1" fill="#d6d6d6"/>
<polygon points="588,305.9 597.5,297.8 597.5,366.7 588,373.2" fill="#f6f6f6"/>
<polygon points="589.3,307 595.8,301.7 595.8,366.5 589.3,370.3" fill="#888888"/>
<line x1="596.6" y1="301.2" x2="596.6" y2="366.5" stroke="#444" stroke-width="0.8"/>
<rect x="593.5" y="336" width="1.2" height="4" fill="#f0f0f0"/>
<polygon points="636,299.8 644.5,301.2 644.5,325.4 636,333" fill="#888888" stroke="#ffffff" stroke-width="0.7"/>
<line x1="640" y1="301.4" x2="640" y2="328.7" stroke="#e8e8e8" stroke-width="0.7"/>
<polygon points="644.5,301.2 648,301.8 648,324 644.5,325.4" fill="#d6d6d6"/>
<line x1="600" y1="369.1" x2="635.5" y2="334" stroke="#ffffff" stroke-width="0.8"/>
<line x1="635.5" y1="301.7" x2="635.5" y2="334" stroke="#ffffff" stroke-width="0.7"/>
<polygon points="652,303.9 668.5,306.6 668.5,372.9 653,387.3" fill="#bd8287"/>
<polygon points="668.5,306.6 782,325.4 782,389.9 668.5,372.9" fill="#52333a"/>
<polygon points="668.5,372.9 653,387.3 782,408.5 782,389.9" fill="#d6d6d6"/>
<line x1="668.5" y1="372.9" x2="782" y2="389.9" stroke="#f2f2f2" stroke-width="0.8"/>
<line x1="668.5" y1="308.6" x2="668.5" y2="372.9" stroke="#f2f2f2" stroke-width="0.8"/>
<polygon points="674.5,322.2 696.5,324.7 696.5,377.1 674.5,374.2" fill="none" stroke="#f2f2f2" stroke-width="1.6"/>
<polygon points="677,324.7 694,326.7 694,376.2 677,373.7" fill="#3c3c3c"/>
<rect x="691.5" y="353.2" width="1.5" height="1.5" fill="#ddd"/>
<polygon points="768.5,337.4 781.5,338.9 781.5,390.4 768.5,388.9" fill="none" stroke="#f2f2f2" stroke-width="1.5"/>
<polygon points="771.5,339.9 780.5,340.9 780.5,389.4 771.5,388.4" fill="#3c3c3c"/>
<polyline points="772,366.4 774.5,364.4 775,367.4" fill="none" stroke="#eee" stroke-width="0.8"/>
<polygon points="706,363 716,359.8 757,366.5 749,371.2" fill="#f6f6f6"/>
<ellipse cx="718.5" cy="365" rx="5" ry="1.9" fill="#7a686c" stroke="#fff" stroke-width="0.5" transform="rotate(9 718.5 365)"/>
<ellipse cx="732" cy="367.2" rx="5" ry="1.9" fill="#7a686c" stroke="#fff" stroke-width="0.5" transform="rotate(9 732 367.2)"/>
<ellipse cx="746" cy="369.5" rx="5" ry="1.9" fill="#7a686c" stroke="#fff" stroke-width="0.5" transform="rotate(9 746 369.5)"/>
<line x1="716" y1="367" x2="716" y2="379" stroke="#ffffff" stroke-width="1.5"/>
<line x1="731.5" y1="369.6" x2="731.5" y2="382" stroke="#ffffff" stroke-width="1.5"/>
<line x1="748" y1="372.3" x2="748" y2="385.2" stroke="#ffffff" stroke-width="1.5"/>
<line x1="716" y1="373.5" x2="748" y2="379" stroke="#ffffff" stroke-width="1.2"/>
<polygon points="653,387.3 782,408.5 782,412.1 653,390.9" fill="#858585"/>
<line x1="653" y1="387.3" x2="782" y2="408.5" stroke="#f6f6f6" stroke-width="0.8"/>
<line x1="653" y1="390.9" x2="782" y2="412.1" stroke="#f6f6f6" stroke-width="0.8"/>
<polygon points="445,377.5 586,397.6 587,464.5 409,436.4" fill="#d6d6d6"/>
<polygon points="404,350 445,358 445,377.5 409.5,436.5 404,435.6" fill="#ececec"/>
<polygon points="409,351 445,358 445,361 433,359 412,355.5 409,355" fill="#888888"/>
<polygon points="404,350 409,350.8 409,435.4 404,434.6" fill="#257d25"/>
<rect x="405.6" y="362" width="2.6" height="69.6" fill="#3c403c"/>
<rect x="403.2" y="350" width="1.1" height="85.6" fill="#e8e8e8"/>
<polygon points="412,355.5 433,359 433,403.6 412,431.2" fill="#f6f6f6"/>
<polygon points="412.6,356.2 421,357.6 412.6,366" fill="#888888"/>
<polygon points="415,364.5 417.7,362 417.7,410.6 415,414.1" fill="#257d25"/>
<polygon points="421,359 424,359.5 424,403.1 421,407.1" fill="#257d25"/>
<polygon points="427,360.5 429.4,361 429.4,397.6 427,400.6" fill="#cfe8dc"/>
<line x1="412" y1="374" x2="426" y2="364" stroke="#f6f6f6" stroke-width="1.3"/>
<line x1="413" y1="399.6" x2="433" y2="383.6" stroke="#f6f6f6" stroke-width="1.5"/>
<line x1="419.3" y1="357" x2="419.3" y2="421.6" stroke="#ffffff" stroke-width="1"/>
<line x1="425.6" y1="358" x2="425.6" y2="413.1" stroke="#ffffff" stroke-width="1"/>
<polygon points="434,358 445,360 445,400.6 434,407.6" fill="#8a8a8a" stroke="#e6e6e6" stroke-width="0.6"/>
<line x1="437" y1="359" x2="437" y2="405.6" stroke="#d8d8d8" stroke-width="0.6"/>
<polygon points="424,411.1 434,402.1 434,408.6 424,419.1" fill="#8a8a8a" stroke="#f0f0f0" stroke-width="0.5"/>
<polygon points="412.6,425.6 416,422.1 416,428.1 412.6,432.1" fill="#9a9a9a" stroke="#f8f8f8" stroke-width="0.5"/>
<line x1="412" y1="423.6" x2="434" y2="401.6" stroke="#dcdcdc" stroke-width="0.7"/>
<polygon points="409,349.8 586,378.8 586,378.6 445,358.5 409,351.8" fill="#a4a4a4"/>
<polygon points="445,358 458,359.9 458,379.4 445,377.5" fill="#257d25"/>
<polygon points="458,359.9 472,361.9 472,386.4 458,384.4" fill="#8a8a12"/>
<polygon points="472,361.9 474,362.2 474,381.7 472,381.4" fill="#e8e860"/>
<polygon points="474,362.2 494,365 494,384.5 474,381.7" fill="#257d25"/>
<polygon points="494,365 507,366.9 507,391.4 494,389.5" fill="#8a8a12"/>
<polygon points="507,366.9 510,367.3 510,391.8 507,391.4" fill="#f2f200"/>
<polygon points="510,367.3 585.5,378.1 585.5,397.6 510,386.8" fill="#52333a"/>
<line x1="475" y1="363.3" x2="475" y2="380.8" stroke="#1f6a1f" stroke-width="0.7"/>
<line x1="477" y1="363.6" x2="477" y2="381.1" stroke="#1f6a1f" stroke-width="0.7"/>
<line x1="479" y1="363.9" x2="479" y2="381.4" stroke="#1f6a1f" stroke-width="0.7"/>
<line x1="481" y1="364.2" x2="481" y2="381.7" stroke="#1f6a1f" stroke-width="0.7"/>
<line x1="483" y1="364.4" x2="483" y2="381.9" stroke="#1f6a1f" stroke-width="0.7"/>
<line x1="485" y1="364.7" x2="485" y2="382.2" stroke="#1f6a1f" stroke-width="0.7"/>
<line x1="487" y1="365" x2="487" y2="382.5" stroke="#1f6a1f" stroke-width="0.7"/>
<line x1="489" y1="365.3" x2="489" y2="382.8" stroke="#1f6a1f" stroke-width="0.7"/>
<line x1="491" y1="365.6" x2="491" y2="383.1" stroke="#1f6a1f" stroke-width="0.7"/>
<line x1="493" y1="365.9" x2="493" y2="383.4" stroke="#1f6a1f" stroke-width="0.7"/>
<polygon points="541,373.7 557,376 557,391.5 541,389.2" fill="#ffffff"/>
<polyline points="532,372.9 541,375.2" fill="none" stroke="#ffffff" stroke-width="1"/>
<polyline points="534,388.7 541,389.7" fill="none" stroke="#ffffff" stroke-width="1"/>
<line x1="445" y1="377.5" x2="585.5" y2="397.6" stroke="#f0f0f0" stroke-width="0.8"/>
<line x1="445" y1="358" x2="585.5" y2="378.1" stroke="#e0e0e0" stroke-width="0.6"/>
<polygon points="588,379.7 635.5,387.5 635.5,420.2 600,455.6 588,462.7" fill="#bd8287"/>
<polygon points="635.5,420.2 648,410.2 648,473.2 588,463.7 600,455.6" fill="#d6d6d6"/>
<polygon points="588,393.7 597.5,385.7 597.5,453.1 588,459.7" fill="#f6f6f6"/>
<polygon points="589.3,394.8 595.8,389.5 595.8,452.9 589.3,456.8" fill="#888888"/>
<line x1="596.6" y1="389" x2="596.6" y2="452.9" stroke="#444" stroke-width="0.8"/>
<rect x="593.5" y="423.1" width="1.2" height="4" fill="#f0f0f0"/>
<polygon points="636,387.5 644.5,388.9 644.5,411.6 636,419.3" fill="#888888" stroke="#ffffff" stroke-width="0.7"/>
<line x1="640" y1="389.2" x2="640" y2="414.9" stroke="#e8e8e8" stroke-width="0.7"/>
<polygon points="644.5,388.9 648,389.5 648,410.2 644.5,411.6" fill="#d6d6d6"/>
<line x1="600" y1="455.6" x2="635.5" y2="420.2" stroke="#ffffff" stroke-width="0.8"/>
<line x1="635.5" y1="389.5" x2="635.5" y2="420.2" stroke="#ffffff" stroke-width="0.7"/>
<polygon points="652,391.7 668.5,394.4 668.5,458.9 653,473.4" fill="#bd8287"/>
<polygon points="668.5,394.4 782,413 782,475.2 668.5,458.9" fill="#52333a"/>
<polygon points="668.5,458.9 653,473.4 782,493.8 782,475.2" fill="#d6d6d6"/>
<line x1="668.5" y1="458.9" x2="782" y2="475.2" stroke="#f2f2f2" stroke-width="0.8"/>
<line x1="668.5" y1="396.4" x2="668.5" y2="458.9" stroke="#f2f2f2" stroke-width="0.8"/>
<polygon points="674.5,408.1 696.5,410.6 696.5,462.9 674.5,460.1" fill="none" stroke="#f2f2f2" stroke-width="1.6"/>
<polygon points="677,410.6 694,412.6 694,462.1 677,459.6" fill="#3c3c3c"/>
<rect x="691.5" y="439.1" width="1.5" height="1.5" fill="#ddd"/>
<polygon points="768.5,422.8 781.5,424.3 781.5,475.8 768.5,474.3" fill="none" stroke="#f2f2f2" stroke-width="1.5"/>
<polygon points="771.5,425.3 780.5,426.3 780.5,474.8 771.5,473.8" fill="#3c3c3c"/>
<polyline points="772,451.8 774.5,449.8 775,452.8" fill="none" stroke="#eee" stroke-width="0.8"/>
<polygon points="706,448.8 716,445.6 757,452.3 749,457" fill="#f6f6f6"/>
<ellipse cx="718.5" cy="450.8" rx="5" ry="1.9" fill="#7a686c" stroke="#fff" stroke-width="0.5" transform="rotate(9 718.5 450.8)"/>
<ellipse cx="732" cy="453" rx="5" ry="1.9" fill="#7a686c" stroke="#fff" stroke-width="0.5" transform="rotate(9 732 453)"/>
<ellipse cx="746" cy="455.3" rx="5" ry="1.9" fill="#7a686c" stroke="#fff" stroke-width="0.5" transform="rotate(9 746 455.3)"/>
<line x1="716" y1="452.8" x2="716" y2="464.8" stroke="#ffffff" stroke-width="1.5"/>
<line x1="731.5" y1="455.3" x2="731.5" y2="467.8" stroke="#ffffff" stroke-width="1.5"/>
<line x1="748" y1="458.1" x2="748" y2="471" stroke="#ffffff" stroke-width="1.5"/>
<line x1="716" y1="459.3" x2="748" y2="464.8" stroke="#ffffff" stroke-width="1.2"/>
<polygon points="653,473.4 782,493.8 782,497.4 653,477" fill="#858585"/>
<line x1="653" y1="473.4" x2="782" y2="493.8" stroke="#f6f6f6" stroke-width="0.8"/>
<line x1="653" y1="477" x2="782" y2="497.4" stroke="#f6f6f6" stroke-width="0.8"/>
<polygon points="652,477.8 668.5,480.4 668.5,546.8 653,561.3" fill="#bd8287"/>
<polygon points="668.5,480.4 782,498.3 782,563.4 668.5,546.8" fill="#52333a"/>
<polygon points="668.5,546.8 653,561.3 782,582 782,563.4" fill="#d6d6d6"/>
<line x1="668.5" y1="546.8" x2="782" y2="563.4" stroke="#f2f2f2" stroke-width="0.8"/>
<line x1="668.5" y1="482.4" x2="668.5" y2="546.8" stroke="#f2f2f2" stroke-width="0.8"/>
<polygon points="674.5,496.1 696.5,498.6 696.5,550.9 674.5,548.1" fill="none" stroke="#f2f2f2" stroke-width="1.6"/>
<polygon points="677,498.6 694,500.6 694,550 677,547.6" fill="#3c3c3c"/>
<rect x="691.5" y="527.1" width="1.5" height="1.5" fill="#ddd"/>
<polygon points="768.5,510.9 781.5,512.4 781.5,563.9 768.5,562.4" fill="none" stroke="#f2f2f2" stroke-width="1.5"/>
<polygon points="771.5,513.4 780.5,514.4 780.5,562.9 771.5,561.9" fill="#3c3c3c"/>
<polyline points="772,539.9 774.5,537.9 775,540.9" fill="none" stroke="#eee" stroke-width="0.8"/>
<polygon points="706,536.8 716,533.6 757,540.3 749,545" fill="#f6f6f6"/>
<ellipse cx="718.5" cy="538.8" rx="5" ry="1.9" fill="#7a686c" stroke="#fff" stroke-width="0.5" transform="rotate(9 718.5 538.8)"/>
<ellipse cx="732" cy="541" rx="5" ry="1.9" fill="#7a686c" stroke="#fff" stroke-width="0.5" transform="rotate(9 732 541)"/>
<ellipse cx="746" cy="543.3" rx="5" ry="1.9" fill="#7a686c" stroke="#fff" stroke-width="0.5" transform="rotate(9 746 543.3)"/>
<line x1="716" y1="540.8" x2="716" y2="552.8" stroke="#ffffff" stroke-width="1.5"/>
<line x1="731.5" y1="543.4" x2="731.5" y2="555.8" stroke="#ffffff" stroke-width="1.5"/>
<line x1="748" y1="546.1" x2="748" y2="559" stroke="#ffffff" stroke-width="1.5"/>
<line x1="716" y1="547.3" x2="748" y2="552.8" stroke="#ffffff" stroke-width="1.2"/>
<polygon points="653,561.3 782,582 782,585.6 653,564.9" fill="#858585"/>
<line x1="653" y1="561.3" x2="782" y2="582" stroke="#f6f6f6" stroke-width="0.8"/>
<line x1="653" y1="564.9" x2="782" y2="585.6" stroke="#f6f6f6" stroke-width="0.8"/>
<polygon points="445.5,565 647.4,599.7 647.4,661.8 409.5,624.8" fill="#d6d6d6"/>
<polygon points="445,443.7 510,453.9 510,577.5 445,565" fill="url(#hg)"/>
<line x1="446" y1="461.8" x2="452" y2="520.4" stroke="#2f7a2f" stroke-width="0.5"/>
<line x1="449" y1="462.3" x2="455" y2="521.6" stroke="#2f7a2f" stroke-width="0.5"/>
<line x1="452" y1="462.8" x2="458" y2="522.8" stroke="#2f7a2f" stroke-width="0.5"/>
<line x1="455" y1="463.3" x2="461" y2="524" stroke="#2f7a2f" stroke-width="0.5"/>
<line x1="458" y1="463.7" x2="464" y2="525.2" stroke="#2f7a2f" stroke-width="0.5"/>
<line x1="461" y1="464.2" x2="467" y2="526.4" stroke="#2f7a2f" stroke-width="0.5"/>
<line x1="464" y1="464.7" x2="470" y2="527.6" stroke="#2f7a2f" stroke-width="0.5"/>
<line x1="467" y1="465.2" x2="473" y2="528.8" stroke="#2f7a2f" stroke-width="0.5"/>
<line x1="470" y1="465.6" x2="476" y2="530" stroke="#2f7a2f" stroke-width="0.5"/>
<line x1="473" y1="466.1" x2="479" y2="531.2" stroke="#2f7a2f" stroke-width="0.5"/>
<line x1="476" y1="466.6" x2="482" y2="532.4" stroke="#2f7a2f" stroke-width="0.5"/>
<line x1="479" y1="467.1" x2="485" y2="533.6" stroke="#2f7a2f" stroke-width="0.5"/>
<line x1="482" y1="467.5" x2="488" y2="534.8" stroke="#2f7a2f" stroke-width="0.5"/>
<line x1="485" y1="468" x2="491" y2="536" stroke="#2f7a2f" stroke-width="0.5"/>
<line x1="488" y1="468.5" x2="494" y2="537.2" stroke="#2f7a2f" stroke-width="0.5"/>
<line x1="491" y1="468.9" x2="497" y2="538.4" stroke="#2f7a2f" stroke-width="0.5"/>
<line x1="494" y1="469.4" x2="500" y2="539.6" stroke="#2f7a2f" stroke-width="0.5"/>
<line x1="497" y1="469.9" x2="503" y2="540.8" stroke="#2f7a2f" stroke-width="0.5"/>
<line x1="500" y1="470.4" x2="506" y2="542" stroke="#2f7a2f" stroke-width="0.5"/>
<line x1="503" y1="470.8" x2="509" y2="543.2" stroke="#2f7a2f" stroke-width="0.5"/>
<line x1="506" y1="471.3" x2="512" y2="544.4" stroke="#2f7a2f" stroke-width="0.5"/>
<line x1="509" y1="471.8" x2="515" y2="545.6" stroke="#2f7a2f" stroke-width="0.5"/>
<polygon points="445,443.7 510,453.9 510,470.9 445,460.7" fill="#257d25"/>
<polygon points="510,453.9 647.4,475.7 647.4,599.7 510,576.2" fill="#52333a"/>
<line x1="530.5" y1="458.1" x2="530.5" y2="579.5" stroke="#f0f0f0" stroke-width="0.8"/>
<line x1="533" y1="458.6" x2="533" y2="580" stroke="#d8c8c8" stroke-width="0.8"/>
<polygon points="459,445.9 472,447.9 472,572.5 459,570.5" fill="#8a8a12"/>
<rect x="472" y="448.9" width="1.6" height="124.1" fill="#e8e860"/>
<polygon points="496,451.7 508,453.6 508,578.5 496,576.5" fill="#8a8a12"/>
<rect x="507.5" y="453.6" width="2.6" height="123.4" fill="#f2f200"/>
<polygon points="445.5,483 463.5,470.5 463.5,490 445.5,506.5" fill="#00f0f0" stroke="#e8ffff" stroke-width="0.6"/>
<polygon points="445.5,468 459,471 459,476 445.5,481" fill="#267a26"/>
<polygon points="510,476.3 634,500.6 616.5,506 510,490.6" fill="#0a8a8c"/>
<line x1="510" y1="475.6" x2="634" y2="499.8" stroke="#f4f4f4" stroke-width="1.6"/>
<line x1="510" y1="490.6" x2="616.5" y2="506" stroke="#d0e8e8" stroke-width="0.7"/>
<polygon points="584,464.5 590.5,465.5 590.5,478.5 584,477.5" fill="#0a8a8c" stroke="#dff" stroke-width="0.5"/>
<polygon points="590.5,465.5 602,467.5 590.5,478.5" fill="#00f0f0"/>
<polygon points="647.5,498.5 587,549 647.5,562.5" fill="#d6d6d6"/>
<polygon points="647.5,494 647.5,499 587.5,549 585,546" fill="#c9868a"/>
<line x1="647.5" y1="494" x2="585" y2="546" stroke="#f4f4f4" stroke-width="0.8"/>
<line x1="590" y1="543.5" x2="590" y2="527.5" stroke="#ffffff" stroke-width="1.3"/>
<line x1="600" y1="535.1" x2="600" y2="518.9" stroke="#ffffff" stroke-width="1.3"/>
<line x1="610" y1="526.7" x2="610" y2="510.3" stroke="#ffffff" stroke-width="1.3"/>
<line x1="620" y1="518.3" x2="620" y2="501.7" stroke="#ffffff" stroke-width="1.3"/>
<line x1="630" y1="509.9" x2="630" y2="493.1" stroke="#ffffff" stroke-width="1.3"/>
<line x1="640" y1="501.5" x2="640" y2="484.5" stroke="#ffffff" stroke-width="1.3"/>
<line x1="588" y1="529" x2="644" y2="481.5" stroke="#ffffff" stroke-width="1.1"/>
<line x1="588" y1="534.5" x2="644" y2="487" stroke="#ffffff" stroke-width="1.1"/>
<line x1="588" y1="540" x2="644" y2="492.5" stroke="#ffffff" stroke-width="1.1"/>
<line x1="588" y1="529" x2="596" y2="531" stroke="#ffffff" stroke-width="1"/>
<polygon points="587,549 647.5,562 647.5,565.5 587,552.5" fill="#8f8f8f"/>
<line x1="587" y1="549" x2="647.5" y2="562" stroke="#ffffff" stroke-width="0.8"/>
<polygon points="584,551.5 590.5,552.5 590.5,566.5 584,565.5" fill="#0a8a8c" stroke="#dff" stroke-width="0.6"/>
<polygon points="590.5,552.5 600,554.5 591.5,566.5 590.5,566.5" fill="#00f0f0"/>
<line x1="596.5" y1="569" x2="607" y2="558" stroke="#ffffff" stroke-width="1.4"/>
<line x1="603" y1="570" x2="613" y2="559.5" stroke="#30d0d0" stroke-width="1.6"/>
<line x1="617.5" y1="566.5" x2="625" y2="560" stroke="#a0e030" stroke-width="1.8"/>
<polygon points="635,563 647,565 647,600 635,597.8" fill="#8a8a12"/>
<polygon points="636,474 644,475.5 644,497 636,500.5" fill="#8a8a12"/>
<line x1="636" y1="479" x2="644" y2="479.5" stroke="#e8e8a0" stroke-width="0.7"/>
<line x1="636" y1="484" x2="644" y2="484.5" stroke="#e8e8a0" stroke-width="0.7"/>
<line x1="636" y1="489" x2="644" y2="489.5" stroke="#e8e8a0" stroke-width="0.7"/>
<line x1="636" y1="494" x2="644" y2="494.5" stroke="#e8e8a0" stroke-width="0.7"/>
<polygon points="535.5,562 577,569.5 577,584.5 535.5,577.5" fill="#f8f8f8"/>
<line x1="541.5" y1="567" x2="541.5" y2="577.9" stroke="#8a7a7c" stroke-width="1"/>
<line x1="546.5" y1="567.9" x2="546.5" y2="578.8" stroke="#8a7a7c" stroke-width="1"/>
<line x1="562.5" y1="570.8" x2="562.5" y2="581.5" stroke="#8a7a7c" stroke-width="1"/>
<line x1="567.5" y1="571.7" x2="567.5" y2="582.4" stroke="#8a7a7c" stroke-width="1"/>
<line x1="577" y1="584.5" x2="584" y2="585.8" stroke="#ffffff" stroke-width="1.5"/>
<polygon points="536,523.5 541.5,518.8 543,527.5" fill="#2c4fc0" stroke="#0c1f70" stroke-width="0.5"/>
<polygon points="542,519.8 549,517 546.5,524.5" fill="#2c4fc0" stroke="#0c1f70" stroke-width="0.5"/>
<line x1="445.5" y1="565" x2="647.4" y2="599.7" stroke="#f2f2f2" stroke-width="0.8"/>
<polygon points="404,437 444.5,443.6 444.5,565 409.5,624.8 404,624" fill="#8a8a8a"/>
<polygon points="404,437 409,438 409,623 404,622.5" fill="#3e443e"/>
<line x1="404.3" y1="440" x2="407.5" y2="440" stroke="#2f7f2f" stroke-width="0.6"/>
<line x1="404.3" y1="442" x2="407.5" y2="442" stroke="#2f7f2f" stroke-width="0.6"/>
<line x1="404.3" y1="444" x2="407.5" y2="444" stroke="#2f7f2f" stroke-width="0.6"/>
<line x1="404.3" y1="446" x2="407.5" y2="446" stroke="#2f7f2f" stroke-width="0.6"/>
<line x1="404.3" y1="448" x2="407.5" y2="448" stroke="#2f7f2f" stroke-width="0.6"/>
<line x1="404.3" y1="450" x2="407.5" y2="450" stroke="#2f7f2f" stroke-width="0.6"/>
<line x1="404.3" y1="452" x2="407.5" y2="452" stroke="#2f7f2f" stroke-width="0.6"/>
<line x1="404.3" y1="454" x2="407.5" y2="454" stroke="#2f7f2f" stroke-width="0.6"/>
<line x1="404.3" y1="456" x2="407.5" y2="456" stroke="#2f7f2f" stroke-width="0.6"/>
<line x1="404.3" y1="458" x2="407.5" y2="458" stroke="#2f7f2f" stroke-width="0.6"/>
<line x1="404.3" y1="460" x2="407.5" y2="460" stroke="#2f7f2f" stroke-width="0.6"/>
<line x1="404.3" y1="462" x2="407.5" y2="462" stroke="#2f7f2f" stroke-width="0.6"/>
<line x1="404.3" y1="464" x2="407.5" y2="464" stroke="#2f7f2f" stroke-width="0.6"/>
<line x1="404.3" y1="466" x2="407.5" y2="466" stroke="#2f7f2f" stroke-width="0.6"/>
<line x1="404.3" y1="468" x2="407.5" y2="468" stroke="#2f7f2f" stroke-width="0.6"/>
<line x1="404.3" y1="470" x2="407.5" y2="470" stroke="#2f7f2f" stroke-width="0.6"/>
<line x1="404.3" y1="472" x2="407.5" y2="472" stroke="#2f7f2f" stroke-width="0.6"/>
<line x1="404.3" y1="474" x2="407.5" y2="474" stroke="#2f7f2f" stroke-width="0.6"/>
<line x1="404.3" y1="476" x2="407.5" y2="476" stroke="#2f7f2f" stroke-width="0.6"/>
<line x1="404.3" y1="478" x2="407.5" y2="478" stroke="#2f7f2f" stroke-width="0.6"/>
<line x1="404.3" y1="480" x2="407.5" y2="480" stroke="#2f7f2f" stroke-width="0.6"/>
<line x1="404.3" y1="482" x2="407.5" y2="482" stroke="#2f7f2f" stroke-width="0.6"/>
<line x1="404.3" y1="484" x2="407.5" y2="484" stroke="#2f7f2f" stroke-width="0.6"/>
<line x1="404.3" y1="486" x2="407.5" y2="486" stroke="#2f7f2f" stroke-width="0.6"/>
<line x1="404.3" y1="488" x2="407.5" y2="488" stroke="#2f7f2f" stroke-width="0.6"/>
<line x1="404.3" y1="490" x2="407.5" y2="490" stroke="#2f7f2f" stroke-width="0.6"/>
<line x1="404.3" y1="492" x2="407.5" y2="492" stroke="#2f7f2f" stroke-width="0.6"/>
<line x1="404.3" y1="494" x2="407.5" y2="494" stroke="#2f7f2f" stroke-width="0.6"/>
<line x1="404.3" y1="496" x2="407.5" y2="496" stroke="#2f7f2f" stroke-width="0.6"/>
<line x1="404.3" y1="498" x2="407.5" y2="498" stroke="#2f7f2f" stroke-width="0.6"/>
<line x1="404.3" y1="500" x2="407.5" y2="500" stroke="#2f7f2f" stroke-width="0.6"/>
<line x1="404.3" y1="502" x2="407.5" y2="502" stroke="#2f7f2f" stroke-width="0.6"/>
<line x1="404.3" y1="504" x2="407.5" y2="504" stroke="#2f7f2f" stroke-width="0.6"/>
<line x1="404.3" y1="506" x2="407.5" y2="506" stroke="#2f7f2f" stroke-width="0.6"/>
<line x1="404.3" y1="508" x2="407.5" y2="508" stroke="#2f7f2f" stroke-width="0.6"/>
<line x1="404.3" y1="510" x2="407.5" y2="510" stroke="#2f7f2f" stroke-width="0.6"/>
<line x1="404.3" y1="512" x2="407.5" y2="512" stroke="#2f7f2f" stroke-width="0.6"/>
<line x1="404.3" y1="514" x2="407.5" y2="514" stroke="#2f7f2f" stroke-width="0.6"/>
<line x1="404.3" y1="516" x2="407.5" y2="516" stroke="#2f7f2f" stroke-width="0.6"/>
<line x1="404.3" y1="518" x2="407.5" y2="518" stroke="#2f7f2f" stroke-width="0.6"/>
<line x1="404.3" y1="520" x2="407.5" y2="520" stroke="#2f7f2f" stroke-width="0.6"/>
<line x1="404.3" y1="522" x2="407.5" y2="522" stroke="#2f7f2f" stroke-width="0.6"/>
<line x1="404.3" y1="524" x2="407.5" y2="524" stroke="#2f7f2f" stroke-width="0.6"/>
<line x1="404.3" y1="526" x2="407.5" y2="526" stroke="#2f7f2f" stroke-width="0.6"/>
<line x1="404.3" y1="528" x2="407.5" y2="528" stroke="#2f7f2f" stroke-width="0.6"/>
<line x1="404.3" y1="530" x2="407.5" y2="530" stroke="#2f7f2f" stroke-width="0.6"/>
<line x1="404.3" y1="532" x2="407.5" y2="532" stroke="#2f7f2f" stroke-width="0.6"/>
<line x1="404.3" y1="534" x2="407.5" y2="534" stroke="#2f7f2f" stroke-width="0.6"/>
<line x1="404.3" y1="536" x2="407.5" y2="536" stroke="#2f7f2f" stroke-width="0.6"/>
<line x1="404.3" y1="538" x2="407.5" y2="538" stroke="#2f7f2f" stroke-width="0.6"/>
<line x1="404.3" y1="540" x2="407.5" y2="540" stroke="#2f7f2f" stroke-width="0.6"/>
<line x1="404.3" y1="542" x2="407.5" y2="542" stroke="#2f7f2f" stroke-width="0.6"/>
<line x1="404.3" y1="544" x2="407.5" y2="544" stroke="#2f7f2f" stroke-width="0.6"/>
<line x1="404.3" y1="546" x2="407.5" y2="546" stroke="#2f7f2f" stroke-width="0.6"/>
<line x1="404.3" y1="548" x2="407.5" y2="548" stroke="#2f7f2f" stroke-width="0.6"/>
<line x1="404.3" y1="550" x2="407.5" y2="550" stroke="#2f7f2f" stroke-width="0.6"/>
<line x1="404.3" y1="552" x2="407.5" y2="552" stroke="#2f7f2f" stroke-width="0.6"/>
<line x1="404.3" y1="554" x2="407.5" y2="554" stroke="#2f7f2f" stroke-width="0.6"/>
<line x1="404.3" y1="556" x2="407.5" y2="556" stroke="#2f7f2f" stroke-width="0.6"/>
<line x1="404.3" y1="558" x2="407.5" y2="558" stroke="#2f7f2f" stroke-width="0.6"/>
<line x1="404.3" y1="560" x2="407.5" y2="560" stroke="#2f7f2f" stroke-width="0.6"/>
<line x1="404.3" y1="562" x2="407.5" y2="562" stroke="#2f7f2f" stroke-width="0.6"/>
<line x1="404.3" y1="564" x2="407.5" y2="564" stroke="#2f7f2f" stroke-width="0.6"/>
<line x1="404.3" y1="566" x2="407.5" y2="566" stroke="#2f7f2f" stroke-width="0.6"/>
<line x1="404.3" y1="568" x2="407.5" y2="568" stroke="#2f7f2f" stroke-width="0.6"/>
<line x1="404.3" y1="570" x2="407.5" y2="570" stroke="#2f7f2f" stroke-width="0.6"/>
<line x1="404.3" y1="572" x2="407.5" y2="572" stroke="#2f7f2f" stroke-width="0.6"/>
<line x1="404.3" y1="574" x2="407.5" y2="574" stroke="#2f7f2f" stroke-width="0.6"/>
<line x1="404.3" y1="576" x2="407.5" y2="576" stroke="#2f7f2f" stroke-width="0.6"/>
<line x1="404.3" y1="578" x2="407.5" y2="578" stroke="#2f7f2f" stroke-width="0.6"/>
<line x1="404.3" y1="580" x2="407.5" y2="580" stroke="#2f7f2f" stroke-width="0.6"/>
<line x1="404.3" y1="582" x2="407.5" y2="582" stroke="#2f7f2f" stroke-width="0.6"/>
<line x1="404.3" y1="584" x2="407.5" y2="584" stroke="#2f7f2f" stroke-width="0.6"/>
<line x1="404.3" y1="586" x2="407.5" y2="586" stroke="#2f7f2f" stroke-width="0.6"/>
<line x1="404.3" y1="588" x2="407.5" y2="588" stroke="#2f7f2f" stroke-width="0.6"/>
<line x1="404.3" y1="590" x2="407.5" y2="590" stroke="#2f7f2f" stroke-width="0.6"/>
<line x1="404.3" y1="592" x2="407.5" y2="592" stroke="#2f7f2f" stroke-width="0.6"/>
<line x1="404.3" y1="594" x2="407.5" y2="594" stroke="#2f7f2f" stroke-width="0.6"/>
<line x1="404.3" y1="596" x2="407.5" y2="596" stroke="#2f7f2f" stroke-width="0.6"/>
<line x1="404.3" y1="598" x2="407.5" y2="598" stroke="#2f7f2f" stroke-width="0.6"/>
<line x1="404.3" y1="600" x2="407.5" y2="600" stroke="#2f7f2f" stroke-width="0.6"/>
<line x1="404.3" y1="602" x2="407.5" y2="602" stroke="#2f7f2f" stroke-width="0.6"/>
<line x1="404.3" y1="604" x2="407.5" y2="604" stroke="#2f7f2f" stroke-width="0.6"/>
<line x1="404.3" y1="606" x2="407.5" y2="606" stroke="#2f7f2f" stroke-width="0.6"/>
<line x1="404.3" y1="608" x2="407.5" y2="608" stroke="#2f7f2f" stroke-width="0.6"/>
<line x1="404.3" y1="610" x2="407.5" y2="610" stroke="#2f7f2f" stroke-width="0.6"/>
<line x1="404.3" y1="612" x2="407.5" y2="612" stroke="#2f7f2f" stroke-width="0.6"/>
<line x1="404.3" y1="614" x2="407.5" y2="614" stroke="#2f7f2f" stroke-width="0.6"/>
<line x1="404.3" y1="616" x2="407.5" y2="616" stroke="#2f7f2f" stroke-width="0.6"/>
<line x1="404.3" y1="618" x2="407.5" y2="618" stroke="#2f7f2f" stroke-width="0.6"/>
<line x1="404.3" y1="620" x2="407.5" y2="620" stroke="#2f7f2f" stroke-width="0.6"/>
<rect x="403.2" y="437" width="1.1" height="188" fill="#e8e8e8"/>
<polygon points="411,449 432,444.5 432,483 411,499" fill="#f2f2f2"/>
<polygon points="414.5,452.3 417.5,451.7 417.5,485.9 414.5,488.9" fill="#257d25"/>
<polygon points="420,451.2 423,450.6 423,480.9 420,483.9" fill="#257d25"/>
<polygon points="426.5,449.9 428.5,449.3 428.5,475.1 426.5,478.1" fill="#257d25"/>
<line x1="411" y1="469" x2="432" y2="461" stroke="#f2f2f2" stroke-width="1.5"/>
<polygon points="433.5,444 444,446 444,480 433.5,488" fill="#8d8d8d" stroke="#e6e6e6" stroke-width="0.6"/>
<polygon points="409,503 432,486 444.5,482 444.5,500 409,529" fill="#8a8a8a" stroke="#e8e8e8" stroke-width="0.6"/>
<line x1="404" y1="519.8" x2="410" y2="521" stroke="#ffffff" stroke-width="1"/>
<polygon points="411,546 432,529 432,583 411,606" fill="#f2f2f2"/>
<polygon points="414.5,545.2 417.5,543.2 417.5,584.1 414.5,591.1" fill="#257d25"/>
<polygon points="420,540.8 423,538.8 423,578.1 420,585.1" fill="#257d25"/>
<polygon points="426.5,535.6 428.5,533.6 428.5,571 426.5,578" fill="#257d25"/>
<line x1="411" y1="575" x2="432" y2="553" stroke="#f2f2f2" stroke-width="1.5"/>
<polygon points="433.5,527 444.5,518 444.5,583 433.5,592" fill="#8d8d8d" stroke="#e6e6e6" stroke-width="0.6"/>
<polygon points="411,606 432,583 444.5,585 413,618" fill="#f4f4f4"/>
<polygon points="411,610 418,603 418,612 411,619" fill="#a8a8a8" stroke="#ffffff" stroke-width="0.5"/>
<polygon points="660,640 782.5,640 782.5,685.5 653,663" fill="#d6d6d6"/>
<polygon points="652.4,567.2 667.3,569.6 667.3,649.2 652.4,660.4" fill="#bd8287"/>
<line x1="653.4" y1="569.3" x2="653.4" y2="659.5" stroke="#ffffff" stroke-width="0.9"/>
<line x1="660.8" y1="570.5" x2="660.8" y2="654" stroke="#ffffff" stroke-width="0.9"/>
<line x1="667.3" y1="569.6" x2="667.3" y2="649.2" stroke="#ffffff" stroke-width="0.9"/>
<polygon points="667.3,569.6 698,574.5 698,652 667.3,649.2" fill="#52333a"/>
<polygon points="698,574.5 709,576.3 709,642.7 698,652" fill="#bd8287"/>
<polygon points="699.8,597.2 709,591.6 709,642.7 699.8,651" fill="#f4f4f4"/>
<polygon points="702.6,600 707.3,597 707.3,640.5 702.6,644.5" fill="#5a5a5a"/>
<line x1="705" y1="600" x2="705" y2="642" stroke="#b8b8b8" stroke-width="0.8"/>
<polygon points="709,576.3 715,577.3 715,647 709,642.7" fill="#52333a"/>
<rect x="714.7" y="577.3" width="4.6" height="42.2" fill="#52333a"/>
<line x1="715" y1="586.4" x2="719" y2="584" stroke="#f0e0e0" stroke-width="0.7"/>
<line x1="715" y1="594.4" x2="719" y2="592" stroke="#f0e0e0" stroke-width="0.7"/>
<line x1="715" y1="602.4" x2="719" y2="600" stroke="#f0e0e0" stroke-width="0.7"/>
<line x1="715" y1="610.4" x2="719" y2="608" stroke="#f0e0e0" stroke-width="0.7"/>
<line x1="715" y1="618.4" x2="719" y2="616" stroke="#f0e0e0" stroke-width="0.7"/>
<polygon points="719.3,577.9 734.2,580.3 734.2,661.3 724,669.7 719.3,668" fill="#bd8287"/>
<polygon points="714.7,619.5 724,615.8 724,668.7 714.7,671.5" fill="#f6f6f6"/>
<polygon points="717.5,622.5 721.2,621 721.2,667 717.5,668.3" fill="#6a6a6a"/>
<line x1="719.4" y1="623" x2="719.4" y2="667" stroke="#d0d0d0" stroke-width="0.7"/>
<polygon points="734.2,580.3 782.5,588.1 782.5,667.8 734.2,661.3" fill="#52333a"/>
<line x1="739.8" y1="583.2" x2="739.8" y2="643.6" stroke="#f0f0f0" stroke-width="0.9"/>
<line x1="734.2" y1="661.3" x2="782.5" y2="667.8" stroke="#e8e8e8" stroke-width="0.6"/>
<line x1="655.5" y1="579.5" x2="665" y2="570.5" stroke="#a6e04a" stroke-width="1.6"/>
<line x1="655" y1="581" x2="665.5" y2="571.5" stroke="#ffffff" stroke-width="0.5"/>
<polyline points="669,570.4 708,576.6" fill="none" stroke="#9ddc3c" stroke-width="1.5"/>
<polyline points="730,579.2 743.5,582.2" fill="none" stroke="#b4e070" stroke-width="1.6"/>
<line x1="765.5" y1="595.5" x2="776" y2="585.5" stroke="#40d8d8" stroke-width="2"/>
<line x1="764.5" y1="596.5" x2="767" y2="594" stroke="#ffffff" stroke-width="1.5"/>
<polygon points="656,641 668,630 680,632 668.5,643.5" fill="#f6f6f6"/>
<ellipse cx="667.5" cy="636.8" rx="5.5" ry="2" fill="#b0a4a6" stroke="#fff" stroke-width="0.5" transform="rotate(-25 667.5 636.8)"/>
<line x1="661.5" y1="643.5" x2="661.5" y2="660" stroke="#ffffff" stroke-width="1.4"/>
<line x1="668" y1="644" x2="668" y2="653.5" stroke="#ffffff" stroke-width="1.2"/>
<polygon points="735.5,644 749,646.5 749,656.5 735.5,654" fill="#5a5a5a" stroke="#f6f6f6" stroke-width="0.9"/>
<ellipse cx="741.3" cy="659.5" rx="6" ry="4" fill="#8a8a8a" stroke="#f6f6f6" stroke-width="0.9"/>
<polygon points="736.8,661 745.8,662.5 744,667.5 738.5,666.8" fill="#777" stroke="#f0f0f0" stroke-width="0.7"/>
<polygon points="758.4,649.5 767,644 778,646.5 770,652" fill="#f6f6f6"/>
<ellipse cx="768" cy="648" rx="4.5" ry="1.6" fill="#b0a4a6" stroke="#fff" stroke-width="0.5"/>
<line x1="768.5" y1="652" x2="768.5" y2="668" stroke="#ffffff" stroke-width="1.4"/>
<polyline points="657,315.2 661,313.9 711.5,322.7 719,316.5 727,318.8" fill="none" stroke="#f2f2f2" stroke-width="2.6"/>
<polyline points="661,313.9 711.5,322.7 719,316.5" fill="none" stroke="#9ddc3c" stroke-width="1.6"/>
<line x1="728" y1="319.5" x2="760" y2="325.2" stroke="#b9e27a" stroke-width="1.4"/>
<polyline points="656,315.6 664,308.9 660,308.2" fill="none" stroke="#ffffff" stroke-width="1"/>
<polyline points="657,403 661,401.6 711.5,410.4 719,404.2 727,406.5" fill="none" stroke="#f2f2f2" stroke-width="2.6"/>
<polyline points="661,401.6 711.5,410.4 719,404.2" fill="none" stroke="#9ddc3c" stroke-width="1.6"/>
<line x1="728" y1="407.1" x2="760" y2="412.9" stroke="#b9e27a" stroke-width="1.4"/>
<polyline points="656,403.3 664,396.6 660,396" fill="none" stroke="#ffffff" stroke-width="1"/>
<polyline points="657,489.1 661,487.7 711.5,496.2 719,489.9 727,492.1" fill="none" stroke="#f2f2f2" stroke-width="2.6"/>
<polyline points="661,487.7 711.5,496.2 719,489.9" fill="none" stroke="#9ddc3c" stroke-width="1.6"/>
<line x1="728" y1="492.8" x2="760" y2="498.3" stroke="#b9e27a" stroke-width="1.4"/>
<polyline points="656,489.4 664,482.7 660,482" fill="none" stroke="#ffffff" stroke-width="1"/>
<polyline points="655,226 664,217.5 660,217.5" fill="none" stroke="#ffffff" stroke-width="1"/>
<polyline points="762,244 774,232.5" fill="none" stroke="#ffffff" stroke-width="1"/>
<polygon points="404,259.2 652,300.1 652,302.3 404,261.4" fill="#a8a8a8"/>
<line x1="404" y1="259.2" x2="652" y2="300.1" stroke="#ffffff" stroke-width="0.9"/>
<line x1="404" y1="261.6" x2="652" y2="302.5" stroke="#f0f0f0" stroke-width="0.7"/>
<polygon points="404,347.2 652,387.9 652,390.1 404,349.4" fill="#a8a8a8"/>
<line x1="404" y1="347.2" x2="652" y2="387.9" stroke="#ffffff" stroke-width="0.9"/>
<line x1="404" y1="349.6" x2="652" y2="390.3" stroke="#f0f0f0" stroke-width="0.7"/>
<polygon points="404,434.8 652,474 652,476.2 404,437" fill="#a8a8a8"/>
<line x1="404" y1="434.8" x2="652" y2="474" stroke="#ffffff" stroke-width="0.9"/>
<line x1="404" y1="437.2" x2="652" y2="476.4" stroke="#f0f0f0" stroke-width="0.7"/>
<rect x="647.2" y="213.7" width="5.4" height="447.8" fill="#52333a"/>
<line x1="647.5" y1="217.6" x2="652.4" y2="215" stroke="#f0e0e0" stroke-width="0.7"/>
<line x1="647.5" y1="226.6" x2="652.4" y2="224" stroke="#f0e0e0" stroke-width="0.7"/>
<line x1="647.5" y1="235.6" x2="652.4" y2="233" stroke="#f0e0e0" stroke-width="0.7"/>
<line x1="647.5" y1="244.6" x2="652.4" y2="242" stroke="#f0e0e0" stroke-width="0.7"/>
<line x1="647.5" y1="253.6" x2="652.4" y2="251" stroke="#f0e0e0" stroke-width="0.7"/>
<line x1="647.5" y1="262.6" x2="652.4" y2="260" stroke="#f0e0e0" stroke-width="0.7"/>
<line x1="647.5" y1="271.6" x2="652.4" y2="269" stroke="#f0e0e0" stroke-width="0.7"/>
<line x1="647.5" y1="280.6" x2="652.4" y2="278" stroke="#f0e0e0" stroke-width="0.7"/>
<line x1="647.5" y1="289.6" x2="652.4" y2="287" stroke="#f0e0e0" stroke-width="0.7"/>
<line x1="647.5" y1="298.6" x2="652.4" y2="296" stroke="#f0e0e0" stroke-width="0.7"/>
<line x1="647.5" y1="307.6" x2="652.4" y2="305" stroke="#f0e0e0" stroke-width="0.7"/>
<line x1="647.5" y1="316.6" x2="652.4" y2="314" stroke="#f0e0e0" stroke-width="0.7"/>
<line x1="647.5" y1="325.6" x2="652.4" y2="323" stroke="#f0e0e0" stroke-width="0.7"/>
<line x1="647.5" y1="334.6" x2="652.4" y2="332" stroke="#f0e0e0" stroke-width="0.7"/>
<line x1="647.5" y1="343.6" x2="652.4" y2="341" stroke="#f0e0e0" stroke-width="0.7"/>
<line x1="647.5" y1="352.6" x2="652.4" y2="350" stroke="#f0e0e0" stroke-width="0.7"/>
<line x1="647.5" y1="361.6" x2="652.4" y2="359" stroke="#f0e0e0" stroke-width="0.7"/>
<line x1="647.5" y1="370.6" x2="652.4" y2="368" stroke="#f0e0e0" stroke-width="0.7"/>
<line x1="647.5" y1="379.6" x2="652.4" y2="377" stroke="#f0e0e0" stroke-width="0.7"/>
<line x1="647.5" y1="388.6" x2="652.4" y2="386" stroke="#f0e0e0" stroke-width="0.7"/>
<line x1="647.5" y1="397.6" x2="652.4" y2="395" stroke="#f0e0e0" stroke-width="0.7"/>
<line x1="647.5" y1="406.6" x2="652.4" y2="404" stroke="#f0e0e0" stroke-width="0.7"/>
<line x1="647.5" y1="415.6" x2="652.4" y2="413" stroke="#f0e0e0" stroke-width="0.7"/>
<line x1="647.5" y1="424.6" x2="652.4" y2="422" stroke="#f0e0e0" stroke-width="0.7"/>
<line x1="647.5" y1="433.6" x2="652.4" y2="431" stroke="#f0e0e0" stroke-width="0.7"/>
<line x1="647.5" y1="442.6" x2="652.4" y2="440" stroke="#f0e0e0" stroke-width="0.7"/>
<line x1="647.5" y1="451.6" x2="652.4" y2="449" stroke="#f0e0e0" stroke-width="0.7"/>
<line x1="647.5" y1="460.6" x2="652.4" y2="458" stroke="#f0e0e0" stroke-width="0.7"/>
<line x1="647.5" y1="469.6" x2="652.4" y2="467" stroke="#f0e0e0" stroke-width="0.7"/>
<line x1="647.5" y1="478.6" x2="652.4" y2="476" stroke="#f0e0e0" stroke-width="0.7"/>
<line x1="647.5" y1="487.6" x2="652.4" y2="485" stroke="#f0e0e0" stroke-width="0.7"/>
<line x1="647.5" y1="496.6" x2="652.4" y2="494" stroke="#f0e0e0" stroke-width="0.7"/>
<line x1="647.5" y1="505.6" x2="652.4" y2="503" stroke="#f0e0e0" stroke-width="0.7"/>
<line x1="647.5" y1="514.6" x2="652.4" y2="512" stroke="#f0e0e0" stroke-width="0.7"/>
<line x1="647.5" y1="523.6" x2="652.4" y2="521" stroke="#f0e0e0" stroke-width="0.7"/>
<line x1="647.5" y1="532.6" x2="652.4" y2="530" stroke="#f0e0e0" stroke-width="0.7"/>
<line x1="647.5" y1="541.6" x2="652.4" y2="539" stroke="#f0e0e0" stroke-width="0.7"/>
<line x1="647.5" y1="550.6" x2="652.4" y2="548" stroke="#f0e0e0" stroke-width="0.7"/>
<line x1="647.5" y1="559.6" x2="652.4" y2="557" stroke="#f0e0e0" stroke-width="0.7"/>
<line x1="647.5" y1="568.6" x2="652.4" y2="566" stroke="#f0e0e0" stroke-width="0.7"/>
<line x1="647.5" y1="577.6" x2="652.4" y2="575" stroke="#f0e0e0" stroke-width="0.7"/>
<line x1="647.5" y1="586.6" x2="652.4" y2="584" stroke="#f0e0e0" stroke-width="0.7"/>
<line x1="647.5" y1="595.6" x2="652.4" y2="593" stroke="#f0e0e0" stroke-width="0.7"/>
<line x1="647.5" y1="604.6" x2="652.4" y2="602" stroke="#f0e0e0" stroke-width="0.7"/>
<line x1="647.5" y1="613.6" x2="652.4" y2="611" stroke="#f0e0e0" stroke-width="0.7"/>
<line x1="647.5" y1="622.6" x2="652.4" y2="620" stroke="#f0e0e0" stroke-width="0.7"/>
<line x1="647.5" y1="631.6" x2="652.4" y2="629" stroke="#f0e0e0" stroke-width="0.7"/>
<line x1="647.5" y1="640.6" x2="652.4" y2="638" stroke="#f0e0e0" stroke-width="0.7"/>
<line x1="647.5" y1="649.6" x2="652.4" y2="647" stroke="#f0e0e0" stroke-width="0.7"/>
<line x1="647.5" y1="658.6" x2="652.4" y2="656" stroke="#f0e0e0" stroke-width="0.7"/>
<line x1="647" y1="213.7" x2="647" y2="662" stroke="#e8e0e0" stroke-width="0.5"/>
<line x1="652.8" y1="213.7" x2="652.8" y2="662" stroke="#f4f4f4" stroke-width="0.6"/>
<rect x="646.8" y="214.2" width="5.8" height="12" fill="#0a8a8c" stroke="#dff" stroke-width="0.5"/>
<rect x="646.8" y="301.6" width="5.8" height="12" fill="#0a8a8c" stroke="#dff" stroke-width="0.5"/>
<rect x="646.8" y="389.3" width="5.8" height="12" fill="#0a8a8c" stroke="#dff" stroke-width="0.5"/>
<rect x="646.8" y="475.5" width="5.8" height="12" fill="#0a8a8c" stroke="#dff" stroke-width="0.5"/>
<rect x="782" y="233" width="6.5" height="463.5" fill="#52333a"/>
<line x1="782.3" y1="243" x2="788.2" y2="240" stroke="#f0e0e0" stroke-width="0.6"/>
<line x1="782.3" y1="252" x2="788.2" y2="249" stroke="#f0e0e0" stroke-width="0.6"/>
<line x1="782.3" y1="261" x2="788.2" y2="258" stroke="#f0e0e0" stroke-width="0.6"/>
<line x1="782.3" y1="270" x2="788.2" y2="267" stroke="#f0e0e0" stroke-width="0.6"/>
<line x1="782.3" y1="279" x2="788.2" y2="276" stroke="#f0e0e0" stroke-width="0.6"/>
<line x1="782.3" y1="288" x2="788.2" y2="285" stroke="#f0e0e0" stroke-width="0.6"/>
<line x1="782.3" y1="297" x2="788.2" y2="294" stroke="#f0e0e0" stroke-width="0.6"/>
<line x1="782.3" y1="306" x2="788.2" y2="303" stroke="#f0e0e0" stroke-width="0.6"/>
<line x1="782.3" y1="315" x2="788.2" y2="312" stroke="#f0e0e0" stroke-width="0.6"/>
<line x1="782.3" y1="324" x2="788.2" y2="321" stroke="#f0e0e0" stroke-width="0.6"/>
<line x1="782.3" y1="333" x2="788.2" y2="330" stroke="#f0e0e0" stroke-width="0.6"/>
<line x1="782.3" y1="342" x2="788.2" y2="339" stroke="#f0e0e0" stroke-width="0.6"/>
<line x1="782.3" y1="351" x2="788.2" y2="348" stroke="#f0e0e0" stroke-width="0.6"/>
<line x1="782.3" y1="360" x2="788.2" y2="357" stroke="#f0e0e0" stroke-width="0.6"/>
<line x1="782.3" y1="369" x2="788.2" y2="366" stroke="#f0e0e0" stroke-width="0.6"/>
<line x1="782.3" y1="378" x2="788.2" y2="375" stroke="#f0e0e0" stroke-width="0.6"/>
<line x1="782.3" y1="387" x2="788.2" y2="384" stroke="#f0e0e0" stroke-width="0.6"/>
<line x1="782.3" y1="396" x2="788.2" y2="393" stroke="#f0e0e0" stroke-width="0.6"/>
<line x1="782.3" y1="405" x2="788.2" y2="402" stroke="#f0e0e0" stroke-width="0.6"/>
<line x1="782.3" y1="414" x2="788.2" y2="411" stroke="#f0e0e0" stroke-width="0.6"/>
<line x1="782.3" y1="423" x2="788.2" y2="420" stroke="#f0e0e0" stroke-width="0.6"/>
<line x1="782.3" y1="432" x2="788.2" y2="429" stroke="#f0e0e0" stroke-width="0.6"/>
<line x1="782.3" y1="441" x2="788.2" y2="438" stroke="#f0e0e0" stroke-width="0.6"/>
<line x1="782.3" y1="450" x2="788.2" y2="447" stroke="#f0e0e0" stroke-width="0.6"/>
<line x1="782.3" y1="459" x2="788.2" y2="456" stroke="#f0e0e0" stroke-width="0.6"/>
<line x1="782.3" y1="468" x2="788.2" y2="465" stroke="#f0e0e0" stroke-width="0.6"/>
<line x1="782.3" y1="477" x2="788.2" y2="474" stroke="#f0e0e0" stroke-width="0.6"/>
<line x1="782.3" y1="486" x2="788.2" y2="483" stroke="#f0e0e0" stroke-width="0.6"/>
<line x1="782.3" y1="495" x2="788.2" y2="492" stroke="#f0e0e0" stroke-width="0.6"/>
<line x1="782.3" y1="504" x2="788.2" y2="501" stroke="#f0e0e0" stroke-width="0.6"/>
<line x1="782.3" y1="513" x2="788.2" y2="510" stroke="#f0e0e0" stroke-width="0.6"/>
<line x1="782.3" y1="522" x2="788.2" y2="519" stroke="#f0e0e0" stroke-width="0.6"/>
<line x1="782.3" y1="531" x2="788.2" y2="528" stroke="#f0e0e0" stroke-width="0.6"/>
<line x1="782.3" y1="540" x2="788.2" y2="537" stroke="#f0e0e0" stroke-width="0.6"/>
<line x1="782.3" y1="549" x2="788.2" y2="546" stroke="#f0e0e0" stroke-width="0.6"/>
<line x1="782.3" y1="558" x2="788.2" y2="555" stroke="#f0e0e0" stroke-width="0.6"/>
<line x1="782.3" y1="567" x2="788.2" y2="564" stroke="#f0e0e0" stroke-width="0.6"/>
<line x1="782.3" y1="576" x2="788.2" y2="573" stroke="#f0e0e0" stroke-width="0.6"/>
<line x1="782.3" y1="585" x2="788.2" y2="582" stroke="#f0e0e0" stroke-width="0.6"/>
<line x1="782.3" y1="594" x2="788.2" y2="591" stroke="#f0e0e0" stroke-width="0.6"/>
<line x1="782.3" y1="603" x2="788.2" y2="600" stroke="#f0e0e0" stroke-width="0.6"/>
<line x1="782.3" y1="612" x2="788.2" y2="609" stroke="#f0e0e0" stroke-width="0.6"/>
<line x1="782.3" y1="621" x2="788.2" y2="618" stroke="#f0e0e0" stroke-width="0.6"/>
<line x1="782.3" y1="630" x2="788.2" y2="627" stroke="#f0e0e0" stroke-width="0.6"/>
<line x1="782.3" y1="639" x2="788.2" y2="636" stroke="#f0e0e0" stroke-width="0.6"/>
<line x1="782.3" y1="648" x2="788.2" y2="645" stroke="#f0e0e0" stroke-width="0.6"/>
<line x1="782.3" y1="657" x2="788.2" y2="654" stroke="#f0e0e0" stroke-width="0.6"/>
<line x1="782.3" y1="666" x2="788.2" y2="663" stroke="#f0e0e0" stroke-width="0.6"/>
<line x1="782.3" y1="675" x2="788.2" y2="672" stroke="#f0e0e0" stroke-width="0.6"/>
<line x1="782.3" y1="684" x2="788.2" y2="681" stroke="#f0e0e0" stroke-width="0.6"/>
<line x1="782.3" y1="693" x2="788.2" y2="690" stroke="#f0e0e0" stroke-width="0.6"/>
<line x1="782" y1="233" x2="782" y2="697" stroke="#f4f4f4" stroke-width="0.8"/>
<rect x="782.5" y="238.5" width="5.5" height="11" fill="#0a8a8c" stroke="#dff" stroke-width="0.5"/>
<rect x="782.5" y="324.9" width="5.5" height="11" fill="#0a8a8c" stroke="#dff" stroke-width="0.5"/>
<rect x="782.5" y="412.5" width="5.5" height="11" fill="#0a8a8c" stroke="#dff" stroke-width="0.5"/>
<rect x="782.5" y="497.8" width="5.5" height="11" fill="#0a8a8c" stroke="#dff" stroke-width="0.5"/>
<rect x="782.5" y="696" width="6" height="12" fill="#0a8a8c" stroke="#dff" stroke-width="0.5"/>
<line x1="587" y1="290.2" x2="587" y2="464.5" stroke="#f4f4f4" stroke-width="0.9"/>
<rect x="584" y="291" width="5.5" height="12" fill="#0a8a8c" stroke="#dff" stroke-width="0.5"/>
<rect x="584" y="378.8" width="5.5" height="12" fill="#0a8a8c" stroke="#dff" stroke-width="0.5"/>
<rect x="584" y="465.4" width="5.5" height="12" fill="#0a8a8c" stroke="#dff" stroke-width="0.5"/>
<rect x="584" y="203.6" width="5" height="12" fill="#0a8a8c" stroke="#dff" stroke-width="0.5"/>
<polygon points="783.5,610 794.6,603.7 794.6,647.4 783.5,654.8" fill="#f4f4f4"/>
<polygon points="790,609.3 793.6,607.3 793.6,645 790,647.3" fill="#26384a"/>
<polygon points="783,652 795,645.5 795,649.5 783,656.5" fill="#dcdcdc" stroke="#ffffff" stroke-width="0.5"/>
<rect x="438" y="645.9" width="11" height="71.1" fill="url(#pg)"/>
<line x1="438" y1="645.9" x2="438" y2="716" stroke="#f0e0d0" stroke-width="0.6"/>
<line x1="449" y1="645.9" x2="449" y2="716" stroke="#f0e0d0" stroke-width="0.6"/>
<rect x="452.6" y="648.2" width="11" height="68.8" fill="url(#pg)"/>
<line x1="452.6" y1="648.2" x2="452.6" y2="716" stroke="#f0e0d0" stroke-width="0.6"/>
<line x1="463.6" y1="648.2" x2="463.6" y2="716" stroke="#f0e0d0" stroke-width="0.6"/>
<rect x="467.2" y="650.5" width="11" height="66.5" fill="url(#pg)"/>
<line x1="467.2" y1="650.5" x2="467.2" y2="716" stroke="#f0e0d0" stroke-width="0.6"/>
<line x1="478.2" y1="650.5" x2="478.2" y2="716" stroke="#f0e0d0" stroke-width="0.6"/>
<rect x="481.8" y="652.9" width="11" height="64.1" fill="url(#pg)"/>
<line x1="481.8" y1="652.9" x2="481.8" y2="716" stroke="#f0e0d0" stroke-width="0.6"/>
<line x1="492.8" y1="652.9" x2="492.8" y2="716" stroke="#f0e0d0" stroke-width="0.6"/>
<rect x="496.4" y="655.2" width="11" height="61.8" fill="url(#pg)"/>
<line x1="496.4" y1="655.2" x2="496.4" y2="716" stroke="#f0e0d0" stroke-width="0.6"/>
<line x1="507.4" y1="655.2" x2="507.4" y2="716" stroke="#f0e0d0" stroke-width="0.6"/>
<rect x="511" y="657.5" width="11" height="59.5" fill="url(#pg)"/>
<line x1="511" y1="657.5" x2="511" y2="716" stroke="#f0e0d0" stroke-width="0.6"/>
<line x1="522" y1="657.5" x2="522" y2="716" stroke="#f0e0d0" stroke-width="0.6"/>
<rect x="525.6" y="659.8" width="11" height="57.2" fill="url(#pg)"/>
<line x1="525.6" y1="659.8" x2="525.6" y2="716" stroke="#f0e0d0" stroke-width="0.6"/>
<line x1="536.6" y1="659.8" x2="536.6" y2="716" stroke="#f0e0d0" stroke-width="0.6"/>
<rect x="540.2" y="662.2" width="11" height="54.8" fill="url(#pg)"/>
<line x1="540.2" y1="662.2" x2="540.2" y2="716" stroke="#f0e0d0" stroke-width="0.6"/>
<line x1="551.2" y1="662.2" x2="551.2" y2="716" stroke="#f0e0d0" stroke-width="0.6"/>
<rect x="554.8" y="664.5" width="11" height="52.5" fill="url(#pg)"/>
<line x1="554.8" y1="664.5" x2="554.8" y2="716" stroke="#f0e0d0" stroke-width="0.6"/>
<line x1="565.8" y1="664.5" x2="565.8" y2="716" stroke="#f0e0d0" stroke-width="0.6"/>
<rect x="391.5" y="655" width="6.5" height="62" fill="url(#pg)"/>
<line x1="391.5" y1="658" x2="391.5" y2="716" stroke="#f0e0d0" stroke-width="0.6"/>
<line x1="398" y1="658" x2="398" y2="716" stroke="#f0e0d0" stroke-width="0.6"/>
<rect x="407.5" y="655" width="10.5" height="62" fill="url(#pg)"/>
<line x1="407.5" y1="658" x2="407.5" y2="716" stroke="#f0e0d0" stroke-width="0.6"/>
<line x1="418" y1="658" x2="418" y2="716" stroke="#f0e0d0" stroke-width="0.6"/>
<rect x="426.5" y="655" width="7" height="62" fill="url(#pg)"/>
<line x1="426.5" y1="658" x2="426.5" y2="716" stroke="#f0e0d0" stroke-width="0.6"/>
<line x1="433.5" y1="658" x2="433.5" y2="716" stroke="#f0e0d0" stroke-width="0.6"/>
<polygon points="385,637.5 434,646.5 434,663.5 385,658" fill="#8c5a2a" stroke="#f4e8dc" stroke-width="0.7"/>
<polygon points="434,646.5 436.5,646.8 436.5,662 434,663.5" fill="#c08850"/>
<rect x="563" y="686" width="5" height="31" fill="url(#pg)"/>
<line x1="563" y1="688" x2="563" y2="716" stroke="#f0e0d0" stroke-width="0.6"/>
<line x1="568" y1="688" x2="568" y2="716" stroke="#f0e0d0" stroke-width="0.6"/>
<rect x="574" y="686" width="5" height="31" fill="url(#pg)"/>
<line x1="574" y1="688" x2="574" y2="716" stroke="#f0e0d0" stroke-width="0.6"/>
<line x1="579" y1="688" x2="579" y2="716" stroke="#f0e0d0" stroke-width="0.6"/>
<rect x="580" y="686" width="10" height="31" fill="url(#pg)"/>
<line x1="580" y1="688" x2="580" y2="716" stroke="#f0e0d0" stroke-width="0.6"/>
<line x1="590" y1="688" x2="590" y2="716" stroke="#f0e0d0" stroke-width="0.6"/>
<rect x="595" y="686" width="9" height="31" fill="url(#pg)"/>
<line x1="595" y1="688" x2="595" y2="716" stroke="#f0e0d0" stroke-width="0.6"/>
<line x1="604" y1="688" x2="604" y2="716" stroke="#f0e0d0" stroke-width="0.6"/>
<polygon points="560,664 610,672.5 610,692 586,690 574,687.5 560,685.5" fill="#8c5a2a" stroke="#f4e8dc" stroke-width="0.7"/>
<polygon points="587.5,668.5 595.5,670 595.5,678 587.5,677" fill="none" stroke="#f4e8dc" stroke-width="0.8"/>
<rect x="610" y="674" width="3" height="42" fill="#c08850"/>
<rect x="615" y="676" width="5" height="40" fill="url(#pg)"/>
<rect x="628" y="698" width="4" height="19" fill="url(#pg)"/>
<rect x="635" y="698" width="6" height="19" fill="url(#pg)"/>
<rect x="645" y="698" width="8" height="19" fill="url(#pg)"/>
<rect x="656" y="698" width="4" height="19" fill="url(#pg)"/>
<rect x="663" y="698" width="6" height="19" fill="url(#pg)"/>
<polygon points="622,675.5 673,684 673,702.5 656,700.5 640,697 622,695.5" fill="#8c5a2a" stroke="#f4e8dc" stroke-width="0.7"/>
<polygon points="645.5,680 652,681 652,688 645.5,687" fill="none" stroke="#f4e8dc" stroke-width="0.8"/>
<polygon points="679,683.3 905,716.4 905,716 679,716" fill="#6b4218"/>
<rect x="677" y="685" width="6" height="31" fill="url(#pg)"/>
<line x1="677" y1="685" x2="677" y2="716" stroke="#f0e0d0" stroke-width="0.5"/>
<rect x="685" y="686.3" width="9" height="29.7" fill="url(#pg)"/>
<line x1="685" y1="686.3" x2="685" y2="716" stroke="#f0e0d0" stroke-width="0.5"/>
<rect x="697" y="688.2" width="10" height="27.8" fill="url(#pg)"/>
<line x1="697" y1="688.2" x2="697" y2="716" stroke="#f0e0d0" stroke-width="0.5"/>
<rect x="710" y="690.2" width="10" height="25.8" fill="url(#pg)"/>
<line x1="710" y1="690.2" x2="710" y2="716" stroke="#f0e0d0" stroke-width="0.5"/>
<rect x="722" y="692.2" width="5" height="23.8" fill="#8c5a2a"/>
<rect x="730" y="693.4" width="11" height="22.6" fill="url(#pg)"/>
<line x1="730" y1="693.4" x2="730" y2="716" stroke="#f0e0d0" stroke-width="0.5"/>
<rect x="744" y="695.7" width="11" height="20.3" fill="url(#pg)"/>
<line x1="744" y1="695.7" x2="744" y2="716" stroke="#f0e0d0" stroke-width="0.5"/>
<rect x="757" y="697.7" width="10" height="18.3" fill="url(#pg)"/>
<line x1="757" y1="697.7" x2="757" y2="716" stroke="#f0e0d0" stroke-width="0.5"/>
<rect x="770" y="699.8" width="11" height="16.2" fill="url(#pg)"/>
<line x1="770" y1="699.8" x2="770" y2="716" stroke="#f0e0d0" stroke-width="0.5"/>
<rect x="784" y="702.1" width="14" height="13.9" fill="url(#pg)"/>
<line x1="784" y1="702.1" x2="784" y2="716" stroke="#f0e0d0" stroke-width="0.5"/>
<rect x="800" y="704.6" width="11" height="11.4" fill="url(#pg)"/>
<line x1="800" y1="704.6" x2="800" y2="716" stroke="#f0e0d0" stroke-width="0.5"/>
<rect x="814" y="706.8" width="9" height="9.2" fill="url(#pg)"/>
<line x1="814" y1="706.8" x2="814" y2="716" stroke="#f0e0d0" stroke-width="0.5"/>
<rect x="826" y="708.8" width="12" height="7.2" fill="url(#pg)"/>
<line x1="826" y1="708.8" x2="826" y2="716" stroke="#f0e0d0" stroke-width="0.5"/>
<rect x="840" y="711" width="10" height="5" fill="url(#pg)"/>
<line x1="840" y1="711" x2="840" y2="716" stroke="#f0e0d0" stroke-width="0.5"/>
<rect x="853" y="713.1" width="9" height="2.9" fill="url(#pg)"/>
<line x1="853" y1="713.1" x2="853" y2="716" stroke="#f0e0d0" stroke-width="0.5"/>
<polygon points="676,686 690,688.5 690,703 683,703 683,707 676,706" fill="#8c5a2a" stroke="#f4e8dc" stroke-width="0.6"/>
<polygon points="760,700 812,708.5 812,716 760,716" fill="#8c5a2a"/>
<polygon points="408,624 783.6,685.7 783.6,696.5 408,634.5" fill="#5c5c5c"/>
<rect x="498.5" y="644.9" width="1" height="1" fill="#ffffff"/>
<rect x="642.8" y="663.3" width="1" height="1" fill="#ffffff"/>
<rect x="506.5" y="643.5" width="1.5" height="1.5" fill="#ffffff"/>
<rect x="557.7" y="656.8" width="1" height="1" fill="#e0e0e0"/>
<rect x="732.9" y="681.3" width="1" height="1" fill="#ffffff"/>
<rect x="469.3" y="643.8" width="1" height="1" fill="#c8c8c8"/>
<rect x="700.2" y="678.7" width="1" height="1" fill="#ffffff"/>
<rect x="631.2" y="668.8" width="1.5" height="1.5" fill="#ffffff"/>
<rect x="556.9" y="656.2" width="1.5" height="1.5" fill="#e0e0e0"/>
<rect x="736.9" y="678.3" width="1" height="1" fill="#ffffff"/>
<rect x="490.7" y="647.2" width="1.5" height="1.5" fill="#c8c8c8"/>
<rect x="566.7" y="658" width="2" height="2" fill="#c8c8c8"/>
<rect x="608.7" y="660.9" width="1" height="1" fill="#c8c8c8"/>
<rect x="663.7" y="673.9" width="1" height="1" fill="#e0e0e0"/>
<rect x="669.9" y="669.8" width="2" height="2" fill="#ffffff"/>
<rect x="675.5" y="669.7" width="2" height="2" fill="#c8c8c8"/>
<rect x="516" y="643.5" width="1.5" height="1.5" fill="#ffffff"/>
<rect x="538" y="647" width="1" height="1" fill="#ffffff"/>
<rect x="519.3" y="650" width="1" height="1" fill="#ffffff"/>
<rect x="635.1" y="668" width="1.5" height="1.5" fill="#c8c8c8"/>
<rect x="614.9" y="666.2" width="1" height="1" fill="#e0e0e0"/>
<rect x="781.4" y="687" width="1" height="1" fill="#ffffff"/>
<rect x="633.1" y="661.5" width="1" height="1" fill="#ffffff"/>
<rect x="518.5" y="645.6" width="1" height="1" fill="#c8c8c8"/>
<rect x="526.7" y="652.8" width="1.5" height="1.5" fill="#ffffff"/>
<rect x="581.3" y="657.6" width="2" height="2" fill="#ffffff"/>
<rect x="640.7" y="670.4" width="2" height="2" fill="#c8c8c8"/>
<rect x="570.4" y="657.6" width="1" height="1" fill="#c8c8c8"/>
<rect x="572.7" y="654" width="1" height="1" fill="#c8c8c8"/>
<rect x="414.3" y="630.6" width="2" height="2" fill="#c8c8c8"/>
<rect x="417.5" y="632.8" width="1" height="1" fill="#ffffff"/>
<rect x="645.7" y="666" width="1" height="1" fill="#c8c8c8"/>
<rect x="636.5" y="664.1" width="1.5" height="1.5" fill="#ffffff"/>
<rect x="629.2" y="668.8" width="1" height="1" fill="#c8c8c8"/>
<rect x="503.4" y="644.9" width="2" height="2" fill="#c8c8c8"/>
<rect x="476" y="638.3" width="1" height="1" fill="#c8c8c8"/>
<rect x="521.8" y="647.1" width="1" height="1" fill="#e0e0e0"/>
<rect x="525.3" y="646.3" width="1" height="1" fill="#e0e0e0"/>
<rect x="531.9" y="651.2" width="1" height="1" fill="#ffffff"/>
<rect x="633.5" y="669.4" width="1" height="1" fill="#ffffff"/>
<rect x="711.2" y="681.6" width="1" height="1" fill="#c8c8c8"/>
<rect x="686" y="671.4" width="2" height="2" fill="#ffffff"/>
<rect x="510.7" y="648.8" width="1" height="1" fill="#e0e0e0"/>
<rect x="527.2" y="651.8" width="2" height="2" fill="#e0e0e0"/>
<rect x="731.3" y="679.5" width="1" height="1" fill="#c8c8c8"/>
<rect x="629.3" y="664.2" width="2" height="2" fill="#c8c8c8"/>
<rect x="582.9" y="658.8" width="1" height="1" fill="#ffffff"/>
<rect x="621.4" y="659.7" width="1.5" height="1.5" fill="#e0e0e0"/>
<rect x="484.2" y="642.1" width="2" height="2" fill="#ffffff"/>
<rect x="617.9" y="667.2" width="1" height="1" fill="#ffffff"/>
<rect x="687.3" y="676.8" width="2" height="2" fill="#c8c8c8"/>
<rect x="612.3" y="665.6" width="1" height="1" fill="#c8c8c8"/>
<rect x="454.6" y="635.5" width="1" height="1" fill="#e0e0e0"/>
<rect x="743.5" y="686.1" width="2" height="2" fill="#ffffff"/>
<rect x="414.9" y="633.5" width="1" height="1" fill="#c8c8c8"/>
<rect x="498.9" y="640.5" width="2" height="2" fill="#ffffff"/>
<rect x="429.8" y="637.3" width="1" height="1" fill="#c8c8c8"/>
<rect x="456.7" y="642" width="2" height="2" fill="#ffffff"/>
<rect x="711.9" y="674.1" width="1" height="1" fill="#e0e0e0"/>
<rect x="455.5" y="641.1" width="1" height="1" fill="#e0e0e0"/>
<rect x="499.1" y="642.7" width="1" height="1" fill="#ffffff"/>
<rect x="591.4" y="659.6" width="1.5" height="1.5" fill="#ffffff"/>
<rect x="691.4" y="672.4" width="2" height="2" fill="#ffffff"/>
<rect x="429" y="632.1" width="1" height="1" fill="#ffffff"/>
<rect x="698.4" y="671.8" width="1" height="1" fill="#ffffff"/>
<rect x="589.6" y="654.7" width="1" height="1" fill="#ffffff"/>
<rect x="527.5" y="647.4" width="1" height="1" fill="#ffffff"/>
<rect x="650.7" y="669" width="1" height="1" fill="#c8c8c8"/>
<rect x="481.1" y="640.3" width="1" height="1" fill="#e0e0e0"/>
<rect x="616.7" y="664.8" width="1.5" height="1.5" fill="#ffffff"/>
<rect x="620.8" y="659.7" width="1.5" height="1.5" fill="#ffffff"/>
<rect x="646.8" y="663.8" width="1.5" height="1.5" fill="#ffffff"/>
<rect x="548.5" y="652.3" width="1" height="1" fill="#ffffff"/>
<rect x="763.5" y="685.1" width="1" height="1" fill="#e0e0e0"/>
<rect x="491.3" y="641.4" width="2" height="2" fill="#ffffff"/>
<rect x="708.8" y="675" width="1" height="1" fill="#ffffff"/>
<rect x="758.4" y="684" width="2" height="2" fill="#c8c8c8"/>
<rect x="455.2" y="639.4" width="2" height="2" fill="#ffffff"/>
<rect x="658.3" y="671.4" width="2" height="2" fill="#ffffff"/>
<rect x="711.9" y="679.6" width="1.5" height="1.5" fill="#e0e0e0"/>
<rect x="497.8" y="643.4" width="2" height="2" fill="#ffffff"/>
<rect x="619.9" y="664.8" width="1.5" height="1.5" fill="#e0e0e0"/>
<rect x="714.8" y="676.9" width="1" height="1" fill="#ffffff"/>
<rect x="723.9" y="681.1" width="1" height="1" fill="#c8c8c8"/>
<rect x="707.1" y="673.1" width="2" height="2" fill="#e0e0e0"/>
<rect x="449.7" y="639" width="2" height="2" fill="#ffffff"/>
<rect x="614.6" y="665.8" width="1" height="1" fill="#ffffff"/>
<rect x="500.1" y="642" width="1" height="1" fill="#ffffff"/>
<rect x="639.1" y="668.6" width="1.5" height="1.5" fill="#c8c8c8"/>
<rect x="546.7" y="651.1" width="1" height="1" fill="#ffffff"/>
<rect x="769.5" y="685.7" width="1" height="1" fill="#ffffff"/>
<rect x="723.8" y="683.6" width="1.5" height="1.5" fill="#ffffff"/>
<rect x="468.1" y="638.9" width="1" height="1" fill="#e0e0e0"/>
<rect x="445.7" y="638.4" width="2" height="2" fill="#ffffff"/>
<rect x="628.2" y="667.8" width="1" height="1" fill="#c8c8c8"/>
<rect x="689.8" y="671.3" width="2" height="2" fill="#c8c8c8"/>
<rect x="757.7" y="687.9" width="2" height="2" fill="#c8c8c8"/>
<rect x="659.8" y="672.7" width="2" height="2" fill="#c8c8c8"/>
<rect x="740.9" y="680.7" width="1" height="1" fill="#ffffff"/>
<rect x="709.1" y="674.8" width="2" height="2" fill="#c8c8c8"/>
<rect x="498.8" y="644.4" width="1" height="1" fill="#ffffff"/>
<rect x="778.7" y="688" width="2" height="2" fill="#e0e0e0"/>
<rect x="584.1" y="660.7" width="2" height="2" fill="#ffffff"/>
<rect x="589" y="660.5" width="1.5" height="1.5" fill="#ffffff"/>
<rect x="583.9" y="655.5" width="1" height="1" fill="#ffffff"/>
<rect x="766.6" y="689.3" width="1" height="1" fill="#e0e0e0"/>
<rect x="698.6" y="672.6" width="2" height="2" fill="#ffffff"/>
<rect x="744.7" y="680.8" width="1" height="1" fill="#c8c8c8"/>
<rect x="478.2" y="637.8" width="1" height="1" fill="#ffffff"/>
<rect x="444.5" y="638.9" width="1" height="1" fill="#ffffff"/>
<line x1="408" y1="624" x2="783.6" y2="685.7" stroke="#e8e8e8" stroke-width="0.7"/>
<rect x="404" y="622.5" width="5" height="13" fill="#3c463c" stroke="#e8e8e8" stroke-width="0.5"/>
<rect x="404.5" y="623.5" width="2.5" height="3" fill="#20c040"/>
<polygon points="210,603.5 404,634.4 404,642.9 210,612" fill="#33251c"/>
<polygon points="210,603.5 404,634.4 404,637.9 210,607" fill="#54402f"/>
<line x1="210" y1="603.5" x2="404" y2="634.4" stroke="#cdb9a8" stroke-width="0.9"/>
<line x1="210" y1="612" x2="404" y2="642.9" stroke="#f4ece4" stroke-width="0.9"/>
<line x1="225" y1="606.9" x2="225" y2="613.9" stroke="#a89888" stroke-width="0.8"/>
<line x1="231" y1="607.8" x2="231" y2="614.8" stroke="#a89888" stroke-width="0.8"/>
<line x1="237" y1="608.8" x2="237" y2="615.8" stroke="#a89888" stroke-width="0.8"/>
<line x1="256" y1="611.8" x2="256" y2="618.8" stroke="#a89888" stroke-width="0.8"/>
<line x1="262" y1="612.8" x2="262" y2="619.8" stroke="#a89888" stroke-width="0.8"/>
<line x1="268" y1="613.8" x2="268" y2="620.8" stroke="#a89888" stroke-width="0.8"/>
<line x1="287" y1="616.8" x2="287" y2="623.8" stroke="#a89888" stroke-width="0.8"/>
<line x1="293" y1="617.7" x2="293" y2="624.7" stroke="#a89888" stroke-width="0.8"/>
<line x1="299" y1="618.7" x2="299" y2="625.7" stroke="#a89888" stroke-width="0.8"/>
<line x1="318" y1="621.7" x2="318" y2="628.7" stroke="#a89888" stroke-width="0.8"/>
<line x1="324" y1="622.7" x2="324" y2="629.7" stroke="#a89888" stroke-width="0.8"/>
<line x1="330" y1="623.6" x2="330" y2="630.6" stroke="#a89888" stroke-width="0.8"/>
<line x1="349" y1="626.7" x2="349" y2="633.7" stroke="#a89888" stroke-width="0.8"/>
<line x1="355" y1="627.6" x2="355" y2="634.6" stroke="#a89888" stroke-width="0.8"/>
<line x1="361" y1="628.6" x2="361" y2="635.6" stroke="#a89888" stroke-width="0.8"/>
<line x1="380" y1="631.6" x2="380" y2="638.6" stroke="#a89888" stroke-width="0.8"/>
<line x1="386" y1="632.6" x2="386" y2="639.6" stroke="#a89888" stroke-width="0.8"/>
<line x1="392" y1="633.5" x2="392" y2="640.5" stroke="#a89888" stroke-width="0.8"/>
<polygon points="404,634.9 404,642.4 912,716.5 912,715.5 784,696.5 408,634.5" fill="#3a2a1e"/>
<line x1="408" y1="635" x2="784" y2="697" stroke="#f4ece4" stroke-width="0.8"/>
<line x1="404" y1="638.9" x2="912" y2="716" stroke="#f4ece4" stroke-width="0.7"/>
<line x1="784" y1="696.8" x2="912" y2="715.5" stroke="#f4ece4" stroke-width="0.9"/>
<line x1="410" y1="636.4" x2="410" y2="640.4" stroke="#e8dcd0" stroke-width="0.6"/>
<line x1="419" y1="637.8" x2="419" y2="641.7" stroke="#e8dcd0" stroke-width="0.6"/>
<line x1="428" y1="639.2" x2="428" y2="643.1" stroke="#e8dcd0" stroke-width="0.6"/>
<line x1="437" y1="640.6" x2="437" y2="644.4" stroke="#e8dcd0" stroke-width="0.6"/>
<line x1="446" y1="642.1" x2="446" y2="645.8" stroke="#e8dcd0" stroke-width="0.6"/>
<line x1="455" y1="643.5" x2="455" y2="647.2" stroke="#e8dcd0" stroke-width="0.6"/>
<line x1="464" y1="644.9" x2="464" y2="648.5" stroke="#e8dcd0" stroke-width="0.6"/>
<line x1="473" y1="646.3" x2="473" y2="649.9" stroke="#e8dcd0" stroke-width="0.6"/>
<line x1="482" y1="647.7" x2="482" y2="651.3" stroke="#e8dcd0" stroke-width="0.6"/>
<line x1="491" y1="649.1" x2="491" y2="652.6" stroke="#e8dcd0" stroke-width="0.6"/>
<line x1="500" y1="650.5" x2="500" y2="654" stroke="#e8dcd0" stroke-width="0.6"/>
<line x1="509" y1="651.9" x2="509" y2="655.4" stroke="#e8dcd0" stroke-width="0.6"/>
<line x1="518" y1="653.3" x2="518" y2="656.7" stroke="#e8dcd0" stroke-width="0.6"/>
<line x1="527" y1="654.7" x2="527" y2="658.1" stroke="#e8dcd0" stroke-width="0.6"/>
<line x1="536" y1="656.1" x2="536" y2="659.4" stroke="#e8dcd0" stroke-width="0.6"/>
<line x1="545" y1="657.5" x2="545" y2="660.8" stroke="#e8dcd0" stroke-width="0.6"/>
<line x1="554" y1="658.9" x2="554" y2="662.2" stroke="#e8dcd0" stroke-width="0.6"/>
<line x1="563" y1="660.3" x2="563" y2="663.5" stroke="#e8dcd0" stroke-width="0.6"/>
<line x1="572" y1="661.7" x2="572" y2="664.9" stroke="#e8dcd0" stroke-width="0.6"/>
<line x1="581" y1="663.1" x2="581" y2="666.3" stroke="#e8dcd0" stroke-width="0.6"/>
<line x1="590" y1="664.5" x2="590" y2="667.6" stroke="#e8dcd0" stroke-width="0.6"/>
<line x1="599" y1="665.9" x2="599" y2="669" stroke="#e8dcd0" stroke-width="0.6"/>
<line x1="608" y1="667.3" x2="608" y2="670.3" stroke="#e8dcd0" stroke-width="0.6"/>
<line x1="617" y1="668.7" x2="617" y2="671.7" stroke="#e8dcd0" stroke-width="0.6"/>
<line x1="626" y1="670.1" x2="626" y2="673.1" stroke="#e8dcd0" stroke-width="0.6"/>
<line x1="635" y1="671.5" x2="635" y2="674.4" stroke="#e8dcd0" stroke-width="0.6"/>
<line x1="644" y1="672.9" x2="644" y2="675.8" stroke="#e8dcd0" stroke-width="0.6"/>
<line x1="653" y1="674.3" x2="653" y2="677.2" stroke="#e8dcd0" stroke-width="0.6"/>
<line x1="662" y1="675.7" x2="662" y2="678.5" stroke="#e8dcd0" stroke-width="0.6"/>
<line x1="671" y1="677.2" x2="671" y2="679.9" stroke="#e8dcd0" stroke-width="0.6"/>
<line x1="680" y1="678.6" x2="680" y2="681.3" stroke="#e8dcd0" stroke-width="0.6"/>
<line x1="689" y1="680" x2="689" y2="682.6" stroke="#e8dcd0" stroke-width="0.6"/>
<line x1="698" y1="681.4" x2="698" y2="684" stroke="#e8dcd0" stroke-width="0.6"/>
<line x1="707" y1="682.8" x2="707" y2="685.3" stroke="#e8dcd0" stroke-width="0.6"/>
<line x1="716" y1="684.2" x2="716" y2="686.7" stroke="#e8dcd0" stroke-width="0.6"/>
<line x1="725" y1="685.6" x2="725" y2="688.1" stroke="#e8dcd0" stroke-width="0.6"/>
<line x1="734" y1="687" x2="734" y2="689.4" stroke="#e8dcd0" stroke-width="0.6"/>
<line x1="743" y1="688.4" x2="743" y2="690.8" stroke="#e8dcd0" stroke-width="0.6"/>
<line x1="752" y1="689.8" x2="752" y2="692.2" stroke="#e8dcd0" stroke-width="0.6"/>
<line x1="761" y1="691.2" x2="761" y2="693.5" stroke="#e8dcd0" stroke-width="0.6"/>
<line x1="770" y1="692.6" x2="770" y2="694.9" stroke="#e8dcd0" stroke-width="0.6"/>
<line x1="779" y1="694" x2="779" y2="696.3" stroke="#e8dcd0" stroke-width="0.6"/>
<line x1="788" y1="696.2" x2="788" y2="697.6" stroke="#e8dcd0" stroke-width="0.6"/>
<line x1="797" y1="697.6" x2="797" y2="699" stroke="#e8dcd0" stroke-width="0.6"/>
<line x1="806" y1="699.1" x2="806" y2="700.3" stroke="#e8dcd0" stroke-width="0.6"/>
<line x1="815" y1="700.5" x2="815" y2="701.7" stroke="#e8dcd0" stroke-width="0.6"/>
<line x1="824" y1="701.9" x2="824" y2="703.1" stroke="#e8dcd0" stroke-width="0.6"/>
<line x1="833" y1="703.4" x2="833" y2="704.4" stroke="#e8dcd0" stroke-width="0.6"/>
<polygon points="788,697.5 912,715.5 912,716.5 850,710.1 788,703" fill="#2a1c12"/>
<line x1="792" y1="695.8" x2="792" y2="699.7" stroke="#e8dcd0" stroke-width="0.6"/>
<line x1="802" y1="697.4" x2="802" y2="701.1" stroke="#e8dcd0" stroke-width="0.6"/>
<line x1="812" y1="699" x2="812" y2="702.5" stroke="#e8dcd0" stroke-width="0.6"/>
<line x1="822" y1="700.6" x2="822" y2="703.9" stroke="#e8dcd0" stroke-width="0.6"/>
<line x1="832" y1="702.2" x2="832" y2="705.3" stroke="#e8dcd0" stroke-width="0.6"/>
<line x1="842" y1="703.8" x2="842" y2="706.7" stroke="#e8dcd0" stroke-width="0.6"/>
<line x1="852" y1="705.4" x2="852" y2="708.1" stroke="#e8dcd0" stroke-width="0.6"/>
<line x1="862" y1="707" x2="862" y2="709.5" stroke="#e8dcd0" stroke-width="0.6"/>
<line x1="872" y1="708.6" x2="872" y2="710.9" stroke="#e8dcd0" stroke-width="0.6"/>
<line x1="882" y1="710.2" x2="882" y2="712.3" stroke="#e8dcd0" stroke-width="0.6"/>
<line x1="892" y1="711.8" x2="892" y2="713.7" stroke="#e8dcd0" stroke-width="0.6"/>
<line x1="902" y1="713.4" x2="902" y2="715.1" stroke="#e8dcd0" stroke-width="0.6"/>
<rect x="782.3" y="696.5" width="6.3" height="12" fill="#0a8a8c" stroke="#c8f0f0" stroke-width="0.6"/>
<line x1="785.5" y1="697" x2="785.5" y2="708" stroke="#40c0c0" stroke-width="0.8"/>
<polygon points="748,322.5 754.5,320 752.5,327.5" fill="#2c4fc0" stroke="#0c1f70" stroke-width="0.5"/>
<polygon points="755,318.5 761,316.5 758,322.5" fill="#2c4fc0" stroke="#0c1f70" stroke-width="0.5"/>
<g shape-rendering="geometricPrecision">
<ellipse cx="1181" cy="263" rx="46.5" ry="19.2" fill="none" stroke="#555555" stroke-width="9"/>
<polygon points="1154.8,222.5 1191.3,230 1192.6,266.6 1156,257.8" fill="#6e6e6e"/>
<polygon points="1154.8,222.5 1173.7,211 1205,216 1191.3,230" fill="#7c7c7c"/>
<polygon points="1191.3,230 1205,216 1205,249 1192.6,266.6" fill="#5f5f5f"/>
<text x="1163" y="251" font-family="'Liberation Sans','Noto Sans CJK SC',sans-serif" font-size="16" fill="#8b8b8b" transform="skewY(11) translate(0,-227)">右</text>
<text x="1193.5" y="246" font-family="'Liberation Sans','Noto Sans CJK SC',sans-serif" font-size="13" fill="#737373" transform="skewY(-40) translate(0,1003)">前</text>
<text x="1169" y="221.5" font-family="'Liberation Sans','Noto Sans CJK SC',sans-serif" font-size="6" fill="#8e8e8e" transform="rotate(8 1169 221)">上</text>
<rect x="1184.5" y="225.5" width="7" height="7" fill="#7a8090"/>
<text x="1130" y="252.5" font-family="'Liberation Sans','Noto Sans CJK SC',sans-serif" font-size="10" fill="#b4b4b4" transform="rotate(12 1130 252.5)">东</text>
<text x="1152.5" y="288" font-family="'Liberation Sans','Noto Sans CJK SC',sans-serif" font-size="10" fill="#b4b4b4" transform="rotate(12 1152.5 288)">南</text>
<text x="1220" y="270.5" font-family="'Liberation Sans','Noto Sans CJK SC',sans-serif" font-size="10" fill="#b4b4b4" transform="rotate(12 1220 270.5)">北</text>
<line x1="1210.3" y1="240" x2="1210.3" y2="290" stroke="#2a3a80" stroke-width="1"/>
<circle cx="1209.5" cy="163.7" r="4.2" fill="none" stroke="#e7a21c" stroke-width="1.2"/>
<polygon points="1210,157.5 1214,159.5 1210.5,161.5" fill="#e7a21c"/>
<rect x="1209" y="152.5" width="9.5" height="3" fill="#f4f4f4"/>
<rect x="1225.5" y="150.5" width="7" height="6.5" fill="none" stroke="#f4f4f4" stroke-width="1.6"/>
<polyline points="1228,150 1228,148 1235,148 1235,155 1233.5,155" fill="none" stroke="#f4f4f4" stroke-width="1.4"/>
<line x1="1242.5" y1="148.5" x2="1249" y2="156.5" stroke="#f4f4f4" stroke-width="2.2"/>
<line x1="1249" y1="148.5" x2="1242.5" y2="156.5" stroke="#f4f4f4" stroke-width="2.2"/>
<rect x="1224" y="304.6" width="28" height="100.4" rx="2.5" fill="#515151" stroke="#6a6a6a" stroke-width="0.8"/>
<line x1="1245.3" y1="306.8" x2="1249.3" y2="310.8" stroke="#e0e0e0" stroke-width="1"/>
<line x1="1249.3" y1="306.8" x2="1245.3" y2="310.8" stroke="#e0e0e0" stroke-width="1"/>
<path d="M1238,322 h9 v9 a9,9 0 1 1 -9,-9 z" fill="#a6a6a6"/>
<circle cx="1238" cy="331" r="4.8" fill="none" stroke="#dcdcdc" stroke-width="1.6"/>
<circle cx="1238" cy="331" r="3" fill="#9a9a9a"/>
<line x1="1226" y1="354.5" x2="1250" y2="354.5" stroke="#666" stroke-width="1"/>
<line x1="1226" y1="353.5" x2="1250" y2="353.5" stroke="#444" stroke-width="1"/>
<rect x="1231.7" y="362.6" width="8.6" height="8.6" fill="#6a9a52"/>
<circle cx="1240.2" cy="371.2" r="2.4" fill="#c4c4c4"/>
<rect x="1236" y="347" width="3" height="1" fill="#666"/>
<rect x="1236" y="384.5" width="3" height="1" fill="#666"/>
<line x1="1244.7" y1="397.7" x2="1249.7" y2="397.7" stroke="#e8e8e8" stroke-width="1.2"/>
<polygon points="1244.9,399.7 1249.5,399.7 1247.2,402.2" fill="#e8e8e8"/>
</g>
</svg></div>
</body></html>
